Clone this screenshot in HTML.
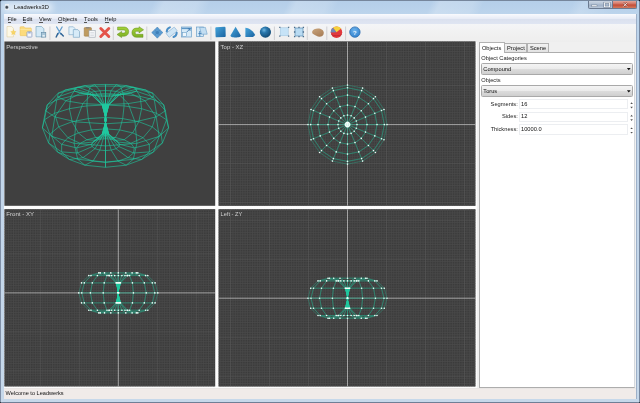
<!DOCTYPE html>
<html><head><meta charset="utf-8"><title>Leadwerks3D</title>
<style>
html,body{margin:0;padding:0;}
body{width:640px;height:403px;overflow:hidden;background:#10151c;font-family:"Liberation Sans",sans-serif;position:relative;}
#win{position:absolute;left:0;top:0;width:640px;height:403px;overflow:hidden;border-radius:3.5px 3.5px 3px 3px;
 background:linear-gradient(#b4cee9,#bcd4ec 14px,#c3d6ea 200px,#c6d8ea 403px);}
.abs{position:absolute}
#glow{left:3px;top:2.5px;width:50px;height:9px;background:rgba(255,255,255,.6);filter:blur(3px);border-radius:4px}
.mi,.lbl,.tab,.combo span,.inp span,#title,#status span{opacity:0.999}
#streaks{left:0;top:0;width:640px;height:14px;background:linear-gradient(115deg,rgba(255,255,255,0) 140px,rgba(255,255,255,.22) 150px,rgba(255,255,255,.18) 180px,rgba(255,255,255,0) 192px,rgba(255,255,255,0) 262px,rgba(255,255,255,.2) 270px,rgba(255,255,255,.14) 298px,rgba(255,255,255,0) 308px,rgba(255,255,255,0) 392px,rgba(255,255,255,.22) 400px,rgba(255,255,255,.16) 430px,rgba(255,255,255,0) 440px,rgba(255,255,255,0) 520px,rgba(255,255,255,.15) 530px,rgba(255,255,255,0) 560px)}

#edge-t{left:0;top:0;width:640px;height:1px;background:#76869c}
#edge-l{left:0;top:0;width:1px;height:403px;background:#7f8fa6}
#edge-r{left:639px;top:0;width:1px;height:403px;background:#76879f}
#edge-b{left:0;top:402px;width:640px;height:1px;background:#6f7f96}
#title{left:14px;top:2.6px;font-size:5.7px;color:#111;white-space:nowrap;line-height:8px;}
#appicon{left:4.6px;top:4.4px;width:4.4px;height:5.2px;background:radial-gradient(circle at 45% 55%,#3a4048 0,#4a5058 0.9px,#dfe6ee 2px,#eef2f7 3px);border-radius:0.5px}
#client{left:4px;top:14.3px;width:632.2px;height:384.7px;background:#f0f0f0;}
#cborder{left:3.7px;top:13.8px;width:632.9px;height:385.6px;border:0.5px solid #9db0c8;box-sizing:border-box}
#menubar{left:4.2px;top:14.4px;width:632px;height:9.6px;background:linear-gradient(#f9fafd,#e8ecf6 45%,#dbe1ef 55%,#dfe5f2);}
.mi{position:absolute;top:16.2px;font-size:5.7px;line-height:7px;color:#111;white-space:nowrap}
.mi u{text-decoration:none;display:inline-block;line-height:6.3px;border-bottom:0.4px solid #555}
#toolbar{left:4px;top:24px;width:632px;height:17.5px;background:linear-gradient(#f4f5f7,#f0f0f0 60%,#eeeeee);}
.sep{position:absolute;top:26.5px;width:0.6px;height:12px;background:#b8b8b8}
#panel{left:478.6px;top:52px;width:156.2px;height:336.3px;background:#fff;border:1px solid #adadad;border-right-color:#d4d8dd;box-sizing:border-box}
.tab{position:absolute;font-size:5.7px;line-height:7px;color:#111;box-sizing:border-box;border:1px solid #b2b2b2;border-bottom:none;text-align:center;white-space:nowrap}
.lbl{position:absolute;font-size:5.7px;line-height:7px;color:#222;white-space:nowrap}
.combo{position:absolute;left:481.3px;width:151.4px;height:11.7px;box-sizing:border-box;border:1px solid #a9a9a9;border-radius:1.5px;background:linear-gradient(#f4f4f4,#ebebeb 48%,#dcdcdc 52%,#cfcfcf);}
.combo span{position:absolute;left:1px;top:1.5px;font-size:5.7px;line-height:7px;color:#111}
.combo i{display:none}
.inp{position:absolute;left:519.2px;width:108.6px;height:10.6px;box-sizing:border-box;border:1px solid #eceef1;background:#fff}
.inp span{position:absolute;left:0.8px;top:0.9px;font-size:5.7px;line-height:7px;color:#111}
.spin{position:absolute;left:630px;width:0;height:0;border-left:1.5px solid transparent;border-right:1.5px solid transparent}
.up{border-bottom:1.8px solid #444}
.dn{border-top:1.8px solid #444}
#status{left:4px;top:388.2px;width:632.2px;height:10.9px;background:linear-gradient(#e2e0df,#f0ebe9 1px,#f0ebe9);box-sizing:border-box}
#status span{position:absolute;left:1.6px;top:2.3px;font-size:5.6px;line-height:7px;color:#111;white-space:nowrap}
#vpbg{left:4px;top:41.5px;width:473px;height:346.8px;background:#fcfcfc}
.cap{position:absolute;top:0.6px;height:8.6px;box-sizing:border-box;border:0.5px solid #6b7a90;border-top:none;}
</style></head>
<body>
<div id="win">
 <div class="abs" id="streaks"></div>
 <div class="abs" id="client"></div>
 <div class="abs" id="cborder"></div>
 <div class="abs" id="glow"></div>
 <div class="abs" id="appicon"></div>
 <div class="abs" id="title">Leadwerks3D</div>
 <!-- caption buttons -->
 <div class="cap" style="left:588px;width:12.6px;border-radius:0 0 0 2px;background:linear-gradient(#ccd7e4,#b0bfd2 48%,#9fb0c6 54%,#b9c7d9)"></div>
 <div class="cap" style="left:600.4px;width:12.8px;border-left:none;background:linear-gradient(#ccd7e4,#b0bfd2 48%,#9fb0c6 54%,#b9c7d9)"></div>
 <div class="cap" style="left:613px;width:24px;border-left:none;border-radius:0 0 2px 0;background:linear-gradient(#e3a79b,#d06d5b 45%,#c24a35 55%,#d27a5e)"></div>
 <svg class="abs" style="left:588px;top:0" width="50" height="10" viewBox="0 0 50 10">
  <rect x="3.6" y="5" width="5.4" height="1.6" fill="#fff" stroke="#5a6b82" stroke-width="0.4"/>
  <rect x="16.4" y="2.8" width="5.2" height="4" fill="none" stroke="#5a6b82" stroke-width="1.7"/>
  <rect x="16.4" y="2.8" width="5.2" height="4" fill="none" stroke="#fff" stroke-width="0.9"/>
  <path d="M35.4 2.9l3.6 3.6M39 2.9l-3.600 3.600" stroke="#8a3a2c" stroke-width="1.700" fill="none"/>
  <path d="M35.4 2.9l3.6 3.6M39 2.9l-3.600 3.600" stroke="#fbeeee" stroke-width="0.950" fill="none"/>
 </svg>
 <div class="abs" id="menubar"></div>
 <div class="mi" style="left:7.6px"><u>F</u>ile</div>
 <div class="mi" style="left:22.6px"><u>E</u>dit</div>
 <div class="mi" style="left:39px"><u>V</u>iew</div>
 <div class="mi" style="left:58px"><u>O</u>bjects</div>
 <div class="mi" style="left:84px"><u>T</u>ools</div>
 <div class="mi" style="left:104.6px"><u>H</u>elp</div>
 <div class="abs" id="toolbar"></div>
 <svg class="abs" style="left:0;top:24px" width="400" height="18" viewBox="0 24 400 18">
 <defs>
  <linearGradient id="gblue" x1="0" y1="0" x2="1" y2="1"><stop offset="0" stop-color="#46a6dc"/><stop offset="1" stop-color="#1a629f"/></linearGradient>
  <radialGradient id="gsph" cx="0.38" cy="0.32" r="0.7"><stop offset="0" stop-color="#6fb6e0"/><stop offset="0.35" stop-color="#2a78ad"/><stop offset="1" stop-color="#134a74"/></radialGradient>
  <linearGradient id="ggreen" x1="0" y1="0" x2="0" y2="1"><stop offset="0" stop-color="#a5d23c"/><stop offset="1" stop-color="#7caf22"/></linearGradient>
  <radialGradient id="ghelp" cx="0.45" cy="0.35" r="0.7"><stop offset="0" stop-color="#6db4ee"/><stop offset="1" stop-color="#2f7fcb"/></radialGradient>
  <linearGradient id="gbrown" x1="0" y1="0" x2="0.6" y2="1"><stop offset="0" stop-color="#c9a57c"/><stop offset="1" stop-color="#a97f58"/></linearGradient>
  <filter id="soft" x="-10%" y="-10%" width="120%" height="120%"><feGaussianBlur stdDeviation="0.45"/></filter>
 </defs>
 <g filter="url(#soft)">
 <!-- separators -->
 <path d="M49.9 26.5V40M113.3 26.5V40M146.8 26.5V40M210.9 26.5V40M274.4 26.5V40M307.3 26.5V40M326.8 26.5V40M345.6 26.5V40" stroke="#c2c2c6" stroke-width="0.7" fill="none"/>
 <!-- 1 new -->
 <path d="M7 26.5h4.6l1.8 1.8v8.6H7z" fill="#fdf8e6" stroke="#d9c89a" stroke-width="0.5"/>
 <path d="M13.4 29.6l0.9 1.7 1.9 0.3-1.4 1.3 0.4 1.9-1.8-0.9-1.7 0.9 0.3-1.9-1.3-1.3 1.9-0.3z" fill="#f7d567" stroke="#ecbc45" stroke-width="0.2"/>
 <!-- 2 open -->
 <path d="M20 27.4c0-0.4 0.3-0.7 0.7-0.7h3.4l1 1.2h5.5c0.4 0 0.7 0.3 0.7 0.7v6.4c0 0.4-0.3 0.7-0.7 0.7H20.7c-0.4 0-0.7-0.3-0.7-0.7z" fill="#fcdb7c" stroke="#ecbf55" stroke-width="0.5"/>
 <path d="M20.3 29.4h10.8" stroke="#fde9a6" stroke-width="0.8"/>
 <rect x="27" y="31.8" width="4.9" height="5.3" rx="0.6" fill="#f4f7fc" stroke="#7f93bd" stroke-width="0.7"/>
 <rect x="28.2" y="31.9" width="2.4" height="1.6" fill="#9db1d6"/>
 <!-- 3 save-as -->
 <path d="M36 26.5h5.6l2.3 2.3v8H36z" fill="#d3e9f6" stroke="#6f9dbb" stroke-width="0.6"/>
 <rect x="41.5" y="32.5" width="4.3" height="4.6" fill="#a9c6d8" stroke="#5f87a3" stroke-width="0.6"/>
 <rect x="42.5" y="35" width="2.3" height="1.6" fill="#e6f0f6"/>
 <!-- 4 cut -->
 <path d="M56.6 26.9l4.2 7.2M62.2 26.9l-4.2 7.2" stroke="#66a0d0" stroke-width="1.15" stroke-linecap="round" fill="none"/>
 <path d="M57.8 33.6l-1.6 3.4M60.9 33.6l2.4 2.4" stroke="#2f6394" stroke-width="1.45" stroke-linecap="round" fill="none"/>
 <!-- 5 copy -->
 <path d="M68.9 26.8h4.4l1.6 1.6v6.3h-6z" fill="#e2f1fa" stroke="#7ba5c6" stroke-width="0.6"/>
 <path d="M73.3 29.6h4.5l1.7 1.7v6h-6.2z" fill="#d7ebf8" stroke="#6f9dc0" stroke-width="0.6"/>
 <!-- 6 paste -->
 <rect x="84.2" y="27.6" width="7.2" height="8.6" rx="0.7" fill="#bf9b5e" stroke="#9a773f" stroke-width="0.5"/>
 <rect x="86" y="26.9" width="3.6" height="1.7" rx="0.5" fill="#8f8a82"/>
 <rect x="89" y="30.5" width="6.2" height="6.7" fill="#f7f8fa" stroke="#9aa3ad" stroke-width="0.6"/>
 <path d="M90.3 32.5h3.6M90.3 34h3.6M90.3 35.5h3.6" stroke="#c3c9d0" stroke-width="0.5"/>
 <!-- 7 delete -->
 <path d="M100.8 28.5l8 8M108.8 28.5l-8 8" stroke="#e4524a" stroke-width="2.9" stroke-linecap="round" fill="none"/>
 <!-- 8 undo -->
 <path d="M117.6 27h6.6c2.6 0 4.5 2 4.5 4.6c0 2.700000000000003-1.9 4.600000000000001-4.5 4.600000000000001h-2.6v1.4l-4.6-3.1 4.6-3.1v1.6h2.2c1 0 1.6-0.6 1.6-1.5c0-0.9-0.6-1.5-1.6-1.5h-6.2z" fill="url(#ggreen)" stroke="#638f1d" stroke-width="0.5" stroke-linejoin="round"/>
 <!-- 9 redo -->
 <path d="M143 37.300000000000004h-6.6c-2.6 0-4.5-2-4.5-4.6c0-2.7 1.9-4.600000000000001 4.5-4.600000000000001h2.6v-1.4l4.6 3.1-4.6 3.1v-1.6h-2.2c-1 0-1.6 0.6-1.6 1.5c0 0.9 0.6 1.5 1.6 1.5h6.2z" fill="url(#ggreen)" stroke="#638f1d" stroke-width="0.5" stroke-linejoin="round"/>
 <!-- 10 move -->
 <path d="M157.300 27l2.600 2.700-1.100 1.400 1.400-1.100 2.700 2.600-2.700 2.600-1.400-1.100 1.100 1.400-2.600 2.700-2.600-2.700 1.100-1.400-1.400 1.100-2.700-2.600 2.700-2.600 1.400 1.100-1.100-1.400z" fill="#5a9bd0" stroke="#3d7db6" stroke-width="0.500" stroke-linejoin="round"/>
 <circle cx="157.300" cy="32.600" r="1.700" fill="#3f7fb8"/>
 <!-- 11 rotate -->
 <g transform="rotate(-38 171.700 32.200)"><rect x="166.500" y="29.700" width="10.400" height="5" rx="0.600" fill="#cfe5f5" stroke="#86b0d3" stroke-width="0.600"/></g>
 <path d="M166.700 31.600c0.200-2.200 1.400-3.600 3.200-4.200M176.700 32.800c-0.200 2.200-1.400 3.600-3.200 4.200" stroke="#4a8ec6" stroke-width="2" fill="none" stroke-linecap="round"/>
 <!-- 12 scale -->
 <rect x="181.600" y="27" width="10" height="10" fill="#d5e9f7" stroke="#6c9fc8" stroke-width="0.700"/>
 <path d="M181.600 28.400h10" stroke="#5f97c6" stroke-width="1.400"/>
 <rect x="182.300" y="32.300" width="4.200" height="4.200" fill="#eef6fc" stroke="#6c9fc8" stroke-width="0.600"/>
 <path d="M186.800 32l3.200-3.200M187.800 28.800h2.200v2.200" stroke="#3573ad" stroke-width="0.800" fill="none"/>
 <!-- 13 shear -->
 <rect x="196.400" y="27" width="7" height="9.600" fill="#d5e9f7" stroke="#6c9fc8" stroke-width="0.700"/>
 <path d="M199.600 27.400h5.800l1.800 6.800h-5.800z" fill="#c3def2" stroke="#6c9fc8" stroke-width="0.600"/>
 <path d="M199.800 31v5.400M198.400 33.600h3" stroke="#3f7eb6" stroke-width="0.900" fill="none"/>
 <!-- 14 cube -->
 <path d="M215.300 28.200c0-0.500 0.300-0.800 0.800-0.900l8.400-0.500c0.600 0 1 0.300 1 0.900l0.200 8.200c0 0.500-0.300 0.900-0.800 1l-8.300 0.400c-0.600 0-1-0.300-1-0.900z" fill="url(#gblue)"/>
 <!-- 15 cone -->
 <path d="M235.600 26.800l5.200 8.600c0.300 1.200-2.200 2-5.200 2c-3 0-5.400-0.800-5.100-2z" fill="url(#gblue)"/>
 <!-- 16 wedge -->
 <path d="M245.400 27.700c4.400 0.600 8 3.600 9.800 7.200l-2.200 2h-7.600z" fill="url(#gblue)"/>
 <!-- 17 sphere -->
 <circle cx="265.400" cy="32.100" r="5.600" fill="url(#gsph)"/>
 <!-- 18 select -->
 <rect x="280.200" y="27.800" width="8" height="8" fill="#c6e3f7" stroke="#9cc0dc" stroke-width="0.500"/>
 <path d="M279.800 27.400h0.010M288.600 27.400h0.010M279.800 36.200h0.010M288.600 36.200h0.010" stroke="#55748f" stroke-width="1.300" stroke-linecap="square"/>
 <!-- 19 select2 -->
 <rect x="295" y="28" width="8" height="8" fill="#b9dbf2" stroke="#5e8fb4" stroke-width="0.700"/>
 <path d="M294.600 27.300h0.010M299 27.300h0.010M303.400 27.300h0.010M294.600 36.600h0.010M299 36.600h0.010M303.400 36.600h0.010M294.600 32h0.010M303.400 32h0.010" stroke="#4a6c8c" stroke-width="1.300" stroke-linecap="square"/>
 <!-- 20 blob -->
 <path d="M312.200 31.600c0.600-2 3-3.200 5.800-3.200c3.200 0 5.800 1.600 5.800 4.400c0 2.400-1.800 4-4.400 4c-2.200 0-3-1.200-4.600-1.800c-1.600-0.600-3.100-1.600-2.600-3.400z" fill="url(#gbrown)"/>
 <!-- 21 ball -->
 <circle cx="336.500" cy="32.200" r="5.700" fill="#e2383c"/>
 <path d="M336.500 32.200l-3.600-4.400c2.400-1.800 6-1.700 8.200 0.600z" fill="#f6d23e"/>
 <path d="M336.500 32.200l-3.600-4.400c-1.500 1.200-2.200 2.800-2.100 4.600z" fill="#6f88b4"/>
 <path d="M331.200 34.500c1.800 1.800 8.400 1.900 10.600 0" stroke="#b8242a" stroke-width="0.800" fill="none"/>
 <!-- 22 help -->
 <circle cx="354.900" cy="32.100" r="5.200" fill="url(#ghelp)" stroke="#2c6db0" stroke-width="0.800"/>
 <text x="354.900" y="34.500" font-family='"Liberation Sans",sans-serif' font-size="6.200" font-weight="bold" fill="#eaf4fd" text-anchor="middle">?</text>
 </g>
</svg>

 <div class="abs" id="vpbg"></div>
 <svg id="vps" width="640" height="403" viewBox="0 0 640 403" style="position:absolute;left:0;top:0;opacity:0.999">
<defs>
<clipPath id="c_persp"><rect x="4.40" y="41.50" width="210.80" height="164.30" fill="#000"/></clipPath>
<clipPath id="c_top"><rect x="218.50" y="41.50" width="257.00" height="164.30" fill="#000"/></clipPath>
<clipPath id="c_front"><rect x="4.40" y="209.20" width="210.80" height="177.30" fill="#000"/></clipPath>
<clipPath id="c_left"><rect x="218.50" y="209.20" width="257.00" height="177.30" fill="#000"/></clipPath>
</defs>
<rect x="4.40" y="41.50" width="210.80" height="164.30" fill="#404040"/>
<g clip-path="url(#c_persp)"><path d="M166.5 119.8L156.5 113.3M166.5 119.8L163.7 104.8M163.7 104.8L154.3 99.9M163.7 104.8L153.0 93.3M153.0 93.3L146.0 90.1M153.0 93.3L137.1 89.0M137.1 89.0L133.1 87.1M137.1 89.0L120.8 93.3M120.8 93.3L119.3 92.2M120.8 93.3L108.9 104.8M108.8 134.2L119.6 144.3M119.6 144.3L118.2 142.1M119.6 144.3L134.3 147.9M134.3 147.9L130.8 143.3M134.3 147.9L149.3 144.3M149.3 144.3L143.1 137.7M149.3 144.3L161.1 134.2M161.1 134.2L152.3 126.9M161.1 134.2L166.5 119.8M156.5 113.3L141.6 108.7M156.5 113.3L154.3 99.9M154.3 99.9L140.2 96.4M154.3 99.9L146.0 90.1M146.0 90.1L134.6 87.8M146.0 90.1L133.1 87.1M133.1 87.1L125.8 85.6M133.1 87.1L119.3 92.2M119.3 92.2L115.8 91.4M119.3 92.2L108.7 104.4M108.5 133.7L118.2 142.1M118.2 142.1L115.0 140.3M118.2 142.1L130.8 143.3M130.8 143.3L124.1 139.8M130.8 143.3L143.1 137.7M143.1 137.7L132.7 132.9M143.1 137.7L152.3 126.9M152.3 126.9L138.8 121.7M152.3 126.9L156.5 113.3M141.6 108.7L124.1 105.9M141.6 108.7L140.2 96.4M140.2 96.4L123.4 94.4M140.2 96.4L134.6 87.8M134.6 87.8L120.6 86.4M134.6 87.8L125.8 85.6M125.8 85.6L116.2 84.7M125.8 85.6L115.8 91.4M115.8 91.4L111.0 90.8M115.8 91.4L107.9 104.2M107.8 133.3L115.0 140.3M115.0 140.3L110.6 139.1M115.0 140.3L124.1 139.8M124.1 139.8L115.3 137.5M124.1 139.8L132.7 132.9M132.7 132.9L119.7 129.9M132.7 132.9L138.8 121.7M138.8 121.7L122.7 118.6M138.8 121.7L141.6 108.7M124.1 105.9L105.5 105.0M124.1 105.9L123.4 94.4M123.4 94.4L105.5 93.7M123.4 94.4L120.6 86.4M120.6 86.4L105.5 86.0M120.6 86.4L116.2 84.7M116.2 84.7L105.5 84.4M116.2 84.7L111.0 90.8M111.0 90.8L105.5 90.6M111.0 90.8L106.8 104.0M106.7 133.0L110.6 139.1M110.6 139.1L105.5 138.7M110.6 139.1L115.3 137.5M115.3 137.5L105.5 136.8M115.3 137.5L119.7 129.9M119.7 129.9L105.5 128.9M119.7 129.9L122.7 118.6M122.7 118.6L105.5 117.5M122.7 118.6L124.1 105.9M105.5 105.0L86.9 105.9M105.5 105.0L105.5 93.7M105.5 93.7L87.6 94.4M105.5 93.7L105.5 86.0M105.5 86.0L90.4 86.4M105.5 86.0L105.5 84.4M105.5 84.4L94.8 84.7M105.5 84.4L105.5 90.6M105.5 90.6L100.0 90.8M105.5 90.6L105.5 103.9M105.5 133.0L105.5 138.7M105.5 138.7L100.4 139.1M105.5 138.7L105.5 136.8M105.5 136.8L95.7 137.5M105.5 136.8L105.5 128.9M105.5 128.9L91.3 129.9M105.5 128.9L105.5 117.5M105.5 117.5L88.3 118.6M105.5 117.5L105.5 105.0M86.9 105.9L69.4 108.7M86.9 105.9L87.6 94.4M87.6 94.4L70.8 96.4M87.6 94.4L90.4 86.4M90.4 86.4L76.4 87.8M90.4 86.4L94.8 84.7M94.8 84.7L85.2 85.6M94.8 84.7L100.0 90.8M100.0 90.8L95.2 91.4M100.0 90.8L104.2 104.0M104.3 133.0L100.4 139.1M100.4 139.1L96.0 140.3M100.4 139.1L95.7 137.5M95.7 137.5L86.9 139.8M95.7 137.5L91.3 129.9M91.3 129.9L78.3 132.9M91.3 129.9L88.3 118.6M88.3 118.6L72.2 121.7M88.3 118.6L86.9 105.9M69.4 108.7L54.5 113.3M69.4 108.7L70.8 96.4M70.8 96.4L56.7 99.9M70.8 96.4L76.4 87.8M76.4 87.8L65.0 90.1M76.4 87.8L85.2 85.6M85.2 85.6L77.9 87.1M85.2 85.6L95.2 91.4M95.2 91.4L91.7 92.2M95.2 91.4L103.1 104.2M103.2 133.3L96.0 140.3M96.0 140.3L92.8 142.1M96.0 140.3L86.9 139.8M86.9 139.8L80.2 143.3M86.9 139.8L78.3 132.9M78.3 132.9L67.9 137.7M78.3 132.9L72.2 121.7M72.2 121.7L58.7 126.9M72.2 121.7L69.4 108.7M54.5 113.3L44.5 119.8M54.5 113.3L56.7 99.9M56.7 99.9L47.3 104.8M56.7 99.9L65.0 90.1M65.0 90.1L58.0 93.3M65.0 90.1L77.9 87.1M77.9 87.1L73.9 89.0M77.9 87.1L91.7 92.2M91.7 92.2L90.2 93.3M91.7 92.2L102.3 104.4M102.5 133.7L92.8 142.1M92.8 142.1L91.4 144.3M92.8 142.1L80.2 143.3M80.2 143.3L76.7 147.9M80.2 143.3L67.9 137.7M67.9 137.7L61.7 144.3M67.9 137.7L58.7 126.9M58.7 126.9L49.9 134.2M58.7 126.9L54.5 113.3M44.5 119.8L42.4 127.9M44.5 119.8L47.3 104.8M47.3 104.8L45.6 110.7M47.3 104.8L58.0 93.3M58.0 93.3L57.7 97.0M58.0 93.3L73.9 89.0M73.9 89.0L74.6 91.2M73.9 89.0L90.2 93.3M90.2 93.3L91.0 94.4M90.2 93.3L102.1 104.8M102.2 134.2L91.4 144.3M91.4 144.3L92.1 146.6M91.4 144.3L76.7 147.9M76.7 147.9L77.5 153.0M76.7 147.9L61.7 144.3M61.7 144.3L61.6 151.9M61.7 144.3L49.9 134.2M49.9 134.2L48.6 143.0M49.9 134.2L44.5 119.8M42.4 127.9L51.8 136.4M42.4 127.9L45.6 110.7M45.6 110.7L54.8 116.9M45.6 110.7L57.7 97.0M57.7 97.0L65.9 100.8M57.7 97.0L74.6 91.2M74.6 91.2L80.6 93.2M74.6 91.2L91.0 94.4M91.0 94.4L94.1 95.4M91.0 94.4L102.3 105.1M102.4 134.6L92.1 146.6M92.1 146.6L95.0 148.7M92.1 146.6L77.5 153.0M77.5 153.0L83.0 157.7M77.5 153.0L61.6 151.9M61.6 151.9L69.4 159.5M61.6 151.9L48.6 143.0M48.6 143.0L57.6 152.1M48.6 143.0L42.4 127.9M51.8 136.4L74.1 143.3M51.8 136.4L54.8 116.9M54.8 116.9L76.0 121.9M54.8 116.9L65.9 100.8M65.9 100.8L82.8 103.6M65.9 100.8L80.6 93.2M80.6 93.2L91.6 94.7M80.6 93.2L94.1 95.4M94.1 95.4L99.2 96.1M94.1 95.4L103.0 105.4M103.1 135.0L95.0 148.7M95.0 148.7L99.8 150.1M95.0 148.7L83.0 157.7M83.0 157.7L93.0 161.1M83.0 157.7L69.4 159.5M69.4 159.5L84.9 165.2M69.4 159.5L57.6 152.1M57.6 152.1L77.7 159.3M57.6 152.1L51.8 136.4M74.1 143.3L105.5 145.9M74.1 143.3L76.0 121.9M76.0 121.9L105.5 123.8M76.0 121.9L82.8 103.6M82.8 103.6L105.5 104.7M82.8 103.6L91.6 94.7M91.6 94.7L105.5 95.2M91.6 94.7L99.2 96.1M99.2 96.1L105.5 96.4M99.2 96.1L104.2 105.5M104.2 135.3L99.8 150.1M99.8 150.1L105.5 150.6M99.8 150.1L93.0 161.1M93.0 161.1L105.5 162.4M93.0 161.1L84.9 165.2M84.9 165.2L105.5 167.3M84.9 165.2L77.7 159.3M77.7 159.3L105.5 162.1M77.7 159.3L74.1 143.3M105.5 145.9L136.9 143.3M105.5 145.9L105.5 123.8M105.5 123.8L135.0 121.9M105.5 123.8L105.5 104.7M105.5 104.7L128.2 103.6M105.5 104.7L105.5 95.2M105.5 95.2L119.4 94.7M105.5 95.2L105.5 96.4M105.5 96.4L111.8 96.1M105.5 96.4L105.5 105.6M105.5 135.4L105.5 150.6M105.5 150.6L111.2 150.1M105.5 150.6L105.5 162.4M105.5 162.4L118.0 161.1M105.5 162.4L105.5 167.3M105.5 167.3L126.1 165.2M105.5 167.3L105.5 162.1M105.5 162.1L133.3 159.3M105.5 162.1L105.5 145.9M136.9 143.3L159.2 136.4M136.9 143.3L135.0 121.9M135.0 121.9L156.2 116.9M135.0 121.9L128.2 103.6M128.2 103.6L145.1 100.8M128.2 103.6L119.4 94.7M119.4 94.7L130.4 93.2M119.4 94.7L111.8 96.1M111.8 96.1L116.9 95.4M111.8 96.1L106.8 105.5M106.8 135.3L111.2 150.1M111.2 150.1L116.0 148.7M111.2 150.1L118.0 161.1M118.0 161.1L128.0 157.7M118.0 161.1L126.1 165.2M126.1 165.2L141.6 159.5M126.1 165.2L133.3 159.3M133.3 159.3L153.4 152.1M133.3 159.3L136.9 143.3M159.2 136.4L168.6 127.9M159.2 136.4L156.2 116.9M156.2 116.9L165.4 110.7M156.2 116.9L145.1 100.8M145.1 100.8L153.3 97.0M145.1 100.8L130.4 93.2M130.4 93.2L136.4 91.2M130.4 93.2L116.9 95.4M116.9 95.4L120.0 94.4M116.9 95.4L108.0 105.4M107.9 135.0L116.0 148.7M116.0 148.7L118.9 146.6M116.0 148.7L128.0 157.7M128.0 157.7L133.5 153.0M128.0 157.7L141.6 159.5M141.6 159.5L149.4 151.9M141.6 159.5L153.4 152.1M153.4 152.1L162.4 143.0M153.4 152.1L159.2 136.4M168.6 127.9L166.5 119.8M168.6 127.9L165.4 110.7M165.4 110.7L163.7 104.8M165.4 110.7L153.3 97.0M153.3 97.0L153.0 93.3M153.3 97.0L136.4 91.2M136.4 91.2L137.1 89.0M136.4 91.2L120.0 94.4M120.0 94.4L120.8 93.3M120.0 94.4L108.7 105.1M108.6 134.6L118.9 146.6M118.9 146.6L119.6 144.3M118.9 146.6L133.5 153.0M133.5 153.0L134.3 147.9M133.5 153.0L149.4 151.9M149.4 151.9L149.3 144.3M149.4 151.9L162.4 143.0M162.4 143.0L161.1 134.2M162.4 143.0L168.6 127.9" stroke="#1fcaa0" stroke-width="0.6" fill="none"/><path d="M108.9 104.8L108.7 104.4M108.9 104.8L104.7 119.8M104.7 119.8L104.8 119.9M104.7 119.8L108.8 134.2M108.8 134.2L108.5 133.7M108.7 104.4L107.9 104.2M108.7 104.4L104.8 119.9M104.8 119.9L105.0 120.0M104.8 119.9L108.5 133.7M108.5 133.7L107.8 133.3M107.9 104.2L106.8 104.0M107.9 104.2L105.0 120.0M105.0 120.0L105.2 120.0M105.0 120.0L107.8 133.3M107.8 133.3L106.7 133.0M106.8 104.0L105.5 103.9M106.8 104.0L105.2 120.0M105.2 120.0L105.5 120.0M105.2 120.0L106.7 133.0M106.7 133.0L105.5 133.0M105.5 103.9L104.2 104.0M105.5 103.9L105.5 120.0M105.5 120.0L105.8 120.0M105.5 120.0L105.5 133.0M105.5 133.0L104.3 133.0M104.2 104.0L103.1 104.2M104.2 104.0L105.8 120.0M105.8 120.0L106.0 120.0M105.8 120.0L104.3 133.0M104.3 133.0L103.2 133.3M103.1 104.2L102.3 104.4M103.1 104.2L106.0 120.0M106.0 120.0L106.2 119.9M106.0 120.0L103.2 133.3M103.2 133.3L102.5 133.7M102.3 104.4L102.1 104.8M102.3 104.4L106.2 119.9M106.2 119.9L106.3 119.8M106.2 119.9L102.5 133.7M102.5 133.7L102.2 134.2M102.1 104.8L102.3 105.1M102.1 104.8L106.3 119.8M106.3 119.8L106.2 119.7M106.3 119.8L102.2 134.2M102.2 134.2L102.4 134.6M102.3 105.1L103.0 105.4M102.3 105.1L106.2 119.7M106.2 119.7L106.0 119.6M106.2 119.7L102.4 134.6M102.4 134.6L103.1 135.0M103.0 105.4L104.2 105.5M103.0 105.4L106.0 119.6M106.0 119.6L105.8 119.6M106.0 119.6L103.1 135.0M103.1 135.0L104.2 135.3M104.2 105.5L105.5 105.6M104.2 105.5L105.8 119.6M105.8 119.6L105.5 119.6M105.8 119.6L104.2 135.3M104.2 135.3L105.5 135.4M105.5 105.6L106.8 105.5M105.5 105.6L105.5 119.6M105.5 119.6L105.2 119.6M105.5 119.6L105.5 135.4M105.5 135.4L106.8 135.3M106.8 105.5L108.0 105.4M106.8 105.5L105.2 119.6M105.2 119.6L105.0 119.6M105.2 119.6L106.8 135.3M106.8 135.3L107.9 135.0M108.0 105.4L108.7 105.1M108.0 105.4L105.0 119.6M105.0 119.6L104.8 119.7M105.0 119.6L107.9 135.0M107.9 135.0L108.6 134.6M108.7 105.1L108.9 104.8M108.7 105.1L104.8 119.7M104.8 119.7L104.7 119.8M104.8 119.7L108.6 134.6M108.6 134.6L108.8 134.2" stroke="#1fcaa0" stroke-width="0.9" fill="none"/></g>
<rect x="218.50" y="41.50" width="257.00" height="164.30" fill="#3c3c3c"/>
<g clip-path="url(#c_top)">
<path d="M220.75 41.50V205.80M223.19 41.50V205.80M225.62 41.50V205.80M228.06 41.50V205.80M232.94 41.50V205.80M235.38 41.50V205.80M237.81 41.50V205.80M240.25 41.50V205.80M242.69 41.50V205.80M245.12 41.50V205.80M247.56 41.50V205.80M250.00 41.50V205.80M252.44 41.50V205.80M254.88 41.50V205.80M257.31 41.50V205.80M259.75 41.50V205.80M262.19 41.50V205.80M264.62 41.50V205.80M267.06 41.50V205.80M271.94 41.50V205.80M274.38 41.50V205.80M276.81 41.50V205.80M279.25 41.50V205.80M281.69 41.50V205.80M284.12 41.50V205.80M286.56 41.50V205.80M289.00 41.50V205.80M291.44 41.50V205.80M293.88 41.50V205.80M296.31 41.50V205.80M298.75 41.50V205.80M301.19 41.50V205.80M303.62 41.50V205.80M306.06 41.50V205.80M310.94 41.50V205.80M313.38 41.50V205.80M315.81 41.50V205.80M318.25 41.50V205.80M320.69 41.50V205.80M323.12 41.50V205.80M325.56 41.50V205.80M328.00 41.50V205.80M330.44 41.50V205.80M332.88 41.50V205.80M335.31 41.50V205.80M337.75 41.50V205.80M340.19 41.50V205.80M342.62 41.50V205.80M345.06 41.50V205.80M349.94 41.50V205.80M352.38 41.50V205.80M354.81 41.50V205.80M357.25 41.50V205.80M359.69 41.50V205.80M362.12 41.50V205.80M364.56 41.50V205.80M367.00 41.50V205.80M369.44 41.50V205.80M371.88 41.50V205.80M374.31 41.50V205.80M376.75 41.50V205.80M379.19 41.50V205.80M381.62 41.50V205.80M384.06 41.50V205.80M388.94 41.50V205.80M391.38 41.50V205.80M393.81 41.50V205.80M396.25 41.50V205.80M398.69 41.50V205.80M401.12 41.50V205.80M403.56 41.50V205.80M406.00 41.50V205.80M408.44 41.50V205.80M410.88 41.50V205.80M413.31 41.50V205.80M415.75 41.50V205.80M418.19 41.50V205.80M420.62 41.50V205.80M423.06 41.50V205.80M427.94 41.50V205.80M430.38 41.50V205.80M432.81 41.50V205.80M435.25 41.50V205.80M437.69 41.50V205.80M440.12 41.50V205.80M442.56 41.50V205.80M445.00 41.50V205.80M447.44 41.50V205.80M449.88 41.50V205.80M452.31 41.50V205.80M454.75 41.50V205.80M457.19 41.50V205.80M459.62 41.50V205.80M462.06 41.50V205.80M466.94 41.50V205.80M469.38 41.50V205.80M471.81 41.50V205.80M474.25 41.50V205.80M218.50 41.72H475.50M218.50 44.16H475.50M218.50 49.04H475.50M218.50 51.47H475.50M218.50 53.91H475.50M218.50 56.35H475.50M218.50 58.79H475.50M218.50 61.22H475.50M218.50 63.66H475.50M218.50 66.10H475.50M218.50 68.54H475.50M218.50 70.97H475.50M218.50 73.41H475.50M218.50 75.85H475.50M218.50 78.29H475.50M218.50 80.72H475.50M218.50 83.16H475.50M218.50 88.04H475.50M218.50 90.47H475.50M218.50 92.91H475.50M218.50 95.35H475.50M218.50 97.79H475.50M218.50 100.22H475.50M218.50 102.66H475.50M218.50 105.10H475.50M218.50 107.54H475.50M218.50 109.97H475.50M218.50 112.41H475.50M218.50 114.85H475.50M218.50 117.29H475.50M218.50 119.72H475.50M218.50 122.16H475.50M218.50 127.04H475.50M218.50 129.47H475.50M218.50 131.91H475.50M218.50 134.35H475.50M218.50 136.79H475.50M218.50 139.22H475.50M218.50 141.66H475.50M218.50 144.10H475.50M218.50 146.54H475.50M218.50 148.97H475.50M218.50 151.41H475.50M218.50 153.85H475.50M218.50 156.29H475.50M218.50 158.72H475.50M218.50 161.16H475.50M218.50 166.04H475.50M218.50 168.47H475.50M218.50 170.91H475.50M218.50 173.35H475.50M218.50 175.79H475.50M218.50 178.22H475.50M218.50 180.66H475.50M218.50 183.10H475.50M218.50 185.54H475.50M218.50 187.97H475.50M218.50 190.41H475.50M218.50 192.85H475.50M218.50 195.29H475.50M218.50 197.72H475.50M218.50 200.16H475.50M218.50 205.04H475.50" stroke="#4a4a4a" stroke-width="0.8" fill="none"/><path d="M230.50 41.50V205.80M269.50 41.50V205.80M308.50 41.50V205.80M386.50 41.50V205.80M425.50 41.50V205.80M464.50 41.50V205.80M218.50 46.60H475.50M218.50 85.60H475.50M218.50 163.60H475.50M218.50 202.60H475.50" stroke="#565656" stroke-width="0.7" fill="none"/><path d="M347.50 41.50V205.80M218.50 124.60H475.50" stroke="#b6b6b6" stroke-width="0.85" fill="none"/>
<path d="M387.0 124.6L384.0 109.5M387.0 124.6L384.3 124.6M384.3 124.6L381.5 110.5M384.3 124.6L377.0 124.6M377.0 124.6L374.8 113.3M377.0 124.6L367.0 124.6M367.0 124.6L365.5 117.1M367.0 124.6L357.0 124.6M357.0 124.6L356.3 121.0M357.0 124.6L349.7 124.6M349.7 124.6L357.0 124.6M357.0 124.6L356.3 121.0M357.0 124.6L367.0 124.6M367.0 124.6L365.5 117.1M367.0 124.6L377.0 124.6M377.0 124.6L374.8 113.3M377.0 124.6L384.3 124.6M384.3 124.6L381.5 110.5M384.3 124.6L387.0 124.6M384.0 109.5L375.4 96.7M384.0 109.5L381.5 110.5M381.5 110.5L373.5 98.6M381.5 110.5L374.8 113.3M374.8 113.3L368.4 103.7M374.8 113.3L365.5 117.1M365.5 117.1L361.3 110.8M365.5 117.1L356.3 121.0M356.3 121.0L354.2 117.9M356.3 121.0L349.5 123.8M349.5 123.8L356.3 121.0M356.3 121.0L354.2 117.9M356.3 121.0L365.5 117.1M365.5 117.1L361.3 110.8M365.5 117.1L374.8 113.3M374.8 113.3L368.4 103.7M374.8 113.3L381.5 110.5M381.5 110.5L373.5 98.6M381.5 110.5L384.0 109.5M375.4 96.7L362.6 88.1M375.4 96.7L373.5 98.6M373.5 98.6L361.6 90.6M373.5 98.6L368.4 103.7M368.4 103.7L358.8 97.3M368.4 103.7L361.3 110.8M361.3 110.8L355.0 106.6M361.3 110.8L354.2 117.9M354.2 117.9L351.1 115.8M354.2 117.9L349.0 123.1M349.0 123.1L354.2 117.9M354.2 117.9L351.1 115.8M354.2 117.9L361.3 110.8M361.3 110.8L355.0 106.6M361.3 110.8L368.4 103.7M368.4 103.7L358.8 97.3M368.4 103.7L373.5 98.6M373.5 98.6L361.6 90.6M373.5 98.6L375.4 96.7M362.6 88.1L347.5 85.1M362.6 88.1L361.6 90.6M361.6 90.6L347.5 87.8M361.6 90.6L358.8 97.3M358.8 97.3L347.5 95.1M358.8 97.3L355.0 106.6M355.0 106.6L347.5 105.1M355.0 106.6L351.1 115.8M351.1 115.8L347.5 115.1M351.1 115.8L348.3 122.6M348.3 122.6L351.1 115.8M351.1 115.8L347.5 115.1M351.1 115.8L355.0 106.6M355.0 106.6L347.5 105.1M355.0 106.6L358.8 97.3M358.8 97.3L347.5 95.1M358.8 97.3L361.6 90.6M361.6 90.6L347.5 87.8M361.6 90.6L362.6 88.1M347.5 85.1L332.4 88.1M347.5 85.1L347.5 87.8M347.5 87.8L333.4 90.6M347.5 87.8L347.5 95.1M347.5 95.1L336.2 97.3M347.5 95.1L347.5 105.1M347.5 105.1L340.0 106.6M347.5 105.1L347.5 115.1M347.5 115.1L343.9 115.8M347.5 115.1L347.5 122.4M347.5 122.4L347.5 115.1M347.5 115.1L343.9 115.8M347.5 115.1L347.5 105.1M347.5 105.1L340.0 106.6M347.5 105.1L347.5 95.1M347.5 95.1L336.2 97.3M347.5 95.1L347.5 87.8M347.5 87.8L333.4 90.6M347.5 87.8L347.5 85.1M332.4 88.1L319.6 96.7M332.4 88.1L333.4 90.6M333.4 90.6L321.5 98.6M333.4 90.6L336.2 97.3M336.2 97.3L326.6 103.7M336.2 97.3L340.0 106.6M340.0 106.6L333.7 110.8M340.0 106.6L343.9 115.8M343.9 115.8L340.8 117.9M343.9 115.8L346.7 122.6M346.7 122.6L343.9 115.8M343.9 115.8L340.8 117.9M343.9 115.8L340.0 106.6M340.0 106.6L333.7 110.8M340.0 106.6L336.2 97.3M336.2 97.3L326.6 103.7M336.2 97.3L333.4 90.6M333.4 90.6L321.5 98.6M333.4 90.6L332.4 88.1M319.6 96.7L311.0 109.5M319.6 96.7L321.5 98.6M321.5 98.6L313.5 110.5M321.5 98.6L326.6 103.7M326.6 103.7L320.2 113.3M326.6 103.7L333.7 110.8M333.7 110.8L329.5 117.1M333.7 110.8L340.8 117.9M340.8 117.9L338.7 121.0M340.8 117.9L346.0 123.1M346.0 123.1L340.8 117.9M340.8 117.9L338.7 121.0M340.8 117.9L333.7 110.8M333.7 110.8L329.5 117.1M333.7 110.8L326.6 103.7M326.6 103.7L320.2 113.3M326.6 103.7L321.5 98.6M321.5 98.6L313.5 110.5M321.5 98.6L319.6 96.7M311.0 109.5L308.0 124.6M311.0 109.5L313.5 110.5M313.5 110.5L310.7 124.6M313.5 110.5L320.2 113.3M320.2 113.3L318.0 124.6M320.2 113.3L329.5 117.1M329.5 117.1L328.0 124.6M329.5 117.1L338.7 121.0M338.7 121.0L338.0 124.6M338.7 121.0L345.5 123.8M345.5 123.8L338.7 121.0M338.7 121.0L338.0 124.6M338.7 121.0L329.5 117.1M329.5 117.1L328.0 124.6M329.5 117.1L320.2 113.3M320.2 113.3L318.0 124.6M320.2 113.3L313.5 110.5M313.5 110.5L310.7 124.6M313.5 110.5L311.0 109.5M308.0 124.6L311.0 139.7M308.0 124.6L310.7 124.6M310.7 124.6L313.5 138.7M310.7 124.6L318.0 124.6M318.0 124.6L320.2 135.9M318.0 124.6L328.0 124.6M328.0 124.6L329.5 132.1M328.0 124.6L338.0 124.6M338.0 124.6L338.7 128.2M338.0 124.6L345.3 124.6M345.3 124.6L338.0 124.6M338.0 124.6L338.7 128.2M338.0 124.6L328.0 124.6M328.0 124.6L329.5 132.1M328.0 124.6L318.0 124.6M318.0 124.6L320.2 135.9M318.0 124.6L310.7 124.6M310.7 124.6L313.5 138.7M310.7 124.6L308.0 124.6M311.0 139.7L319.6 152.5M311.0 139.7L313.5 138.7M313.5 138.7L321.5 150.6M313.5 138.7L320.2 135.9M320.2 135.9L326.6 145.5M320.2 135.9L329.5 132.1M329.5 132.1L333.7 138.4M329.5 132.1L338.7 128.2M338.7 128.2L340.8 131.3M338.7 128.2L345.5 125.4M345.5 125.4L338.7 128.2M338.7 128.2L340.8 131.3M338.7 128.2L329.5 132.1M329.5 132.1L333.7 138.4M329.5 132.1L320.2 135.9M320.2 135.9L326.6 145.5M320.2 135.9L313.5 138.7M313.5 138.7L321.5 150.6M313.5 138.7L311.0 139.7M319.6 152.5L332.4 161.1M319.6 152.5L321.5 150.6M321.5 150.6L333.4 158.6M321.5 150.6L326.6 145.5M326.6 145.5L336.2 151.9M326.6 145.5L333.7 138.4M333.7 138.4L340.0 142.6M333.7 138.4L340.8 131.3M340.8 131.3L343.9 133.4M340.8 131.3L346.0 126.1M346.0 126.1L340.8 131.3M340.8 131.3L343.9 133.4M340.8 131.3L333.7 138.4M333.7 138.4L340.0 142.6M333.7 138.4L326.6 145.5M326.6 145.5L336.2 151.9M326.6 145.5L321.5 150.6M321.5 150.6L333.4 158.6M321.5 150.6L319.6 152.5M332.4 161.1L347.5 164.1M332.4 161.1L333.4 158.6M333.4 158.6L347.5 161.4M333.4 158.6L336.2 151.9M336.2 151.9L347.5 154.1M336.2 151.9L340.0 142.6M340.0 142.6L347.5 144.1M340.0 142.6L343.9 133.4M343.9 133.4L347.5 134.1M343.9 133.4L346.7 126.6M346.7 126.6L343.9 133.4M343.9 133.4L347.5 134.1M343.9 133.4L340.0 142.6M340.0 142.6L347.5 144.1M340.0 142.6L336.2 151.9M336.2 151.9L347.5 154.1M336.2 151.9L333.4 158.6M333.4 158.6L347.5 161.4M333.4 158.6L332.4 161.1M347.5 164.1L362.6 161.1M347.5 164.1L347.5 161.4M347.5 161.4L361.6 158.6M347.5 161.4L347.5 154.1M347.5 154.1L358.8 151.9M347.5 154.1L347.5 144.1M347.5 144.1L355.0 142.6M347.5 144.1L347.5 134.1M347.5 134.1L351.1 133.4M347.5 134.1L347.5 126.8M347.5 126.8L347.5 134.1M347.5 134.1L351.1 133.4M347.5 134.1L347.5 144.1M347.5 144.1L355.0 142.6M347.5 144.1L347.5 154.1M347.5 154.1L358.8 151.9M347.5 154.1L347.5 161.4M347.5 161.4L361.6 158.6M347.5 161.4L347.5 164.1M362.6 161.1L375.4 152.5M362.6 161.1L361.6 158.6M361.6 158.6L373.5 150.6M361.6 158.6L358.8 151.9M358.8 151.9L368.4 145.5M358.8 151.9L355.0 142.6M355.0 142.6L361.3 138.4M355.0 142.6L351.1 133.4M351.1 133.4L354.2 131.3M351.1 133.4L348.3 126.6M348.3 126.6L351.1 133.4M351.1 133.4L354.2 131.3M351.1 133.4L355.0 142.6M355.0 142.6L361.3 138.4M355.0 142.6L358.8 151.9M358.8 151.9L368.4 145.5M358.8 151.9L361.6 158.6M361.6 158.6L373.5 150.6M361.6 158.6L362.6 161.1M375.4 152.5L384.0 139.7M375.4 152.5L373.5 150.6M373.5 150.6L381.5 138.7M373.5 150.6L368.4 145.5M368.4 145.5L374.8 135.9M368.4 145.5L361.3 138.4M361.3 138.4L365.5 132.1M361.3 138.4L354.2 131.3M354.2 131.3L356.3 128.2M354.2 131.3L349.0 126.1M349.0 126.1L354.2 131.3M354.2 131.3L356.3 128.2M354.2 131.3L361.3 138.4M361.3 138.4L365.5 132.1M361.3 138.4L368.4 145.5M368.4 145.5L374.8 135.9M368.4 145.5L373.5 150.6M373.5 150.6L381.5 138.7M373.5 150.6L375.4 152.5M384.0 139.7L387.0 124.6M384.0 139.7L381.5 138.7M381.5 138.7L384.3 124.6M381.5 138.7L374.8 135.9M374.8 135.9L377.0 124.6M374.8 135.9L365.5 132.1M365.5 132.1L367.0 124.6M365.5 132.1L356.3 128.2M356.3 128.2L357.0 124.6M356.3 128.2L349.5 125.4M349.5 125.4L356.3 128.2M356.3 128.2L357.0 124.6M356.3 128.2L365.5 132.1M365.5 132.1L367.0 124.6M365.5 132.1L374.8 135.9M374.8 135.9L377.0 124.6M374.8 135.9L381.5 138.7M381.5 138.7L384.3 124.6M381.5 138.7L384.0 139.7" stroke="#2e9077" stroke-width="0.55" fill="none"/>
<path d="M349.7 124.6L349.5 123.8M349.7 124.6L347.0 124.6M347.0 124.6L347.0 124.8M347.0 124.6L349.7 124.6M349.7 124.6L349.5 123.8M349.5 123.8L349.0 123.1M349.5 123.8L347.0 124.8M347.0 124.8L347.1 125.0M347.0 124.8L349.5 123.8M349.5 123.8L349.0 123.1M349.0 123.1L348.3 122.6M349.0 123.1L347.1 125.0M347.1 125.0L347.3 125.1M347.1 125.0L349.0 123.1M349.0 123.1L348.3 122.6M348.3 122.6L347.5 122.4M348.3 122.6L347.3 125.1M347.3 125.1L347.5 125.1M347.3 125.1L348.3 122.6M348.3 122.6L347.5 122.4M347.5 122.4L346.7 122.6M347.5 122.4L347.5 125.1M347.5 125.1L347.7 125.1M347.5 125.1L347.5 122.4M347.5 122.4L346.7 122.6M346.7 122.6L346.0 123.1M346.7 122.6L347.7 125.1M347.7 125.1L347.9 125.0M347.7 125.1L346.7 122.6M346.7 122.6L346.0 123.1M346.0 123.1L345.5 123.8M346.0 123.1L347.9 125.0M347.9 125.0L348.0 124.8M347.9 125.0L346.0 123.1M346.0 123.1L345.5 123.8M345.5 123.8L345.3 124.6M345.5 123.8L348.0 124.8M348.0 124.8L348.0 124.6M348.0 124.8L345.5 123.8M345.5 123.8L345.3 124.6M345.3 124.6L345.5 125.4M345.3 124.6L348.0 124.6M348.0 124.6L348.0 124.4M348.0 124.6L345.3 124.6M345.3 124.6L345.5 125.4M345.5 125.4L346.0 126.1M345.5 125.4L348.0 124.4M348.0 124.4L347.9 124.2M348.0 124.4L345.5 125.4M345.5 125.4L346.0 126.1M346.0 126.1L346.7 126.6M346.0 126.1L347.9 124.2M347.9 124.2L347.7 124.1M347.9 124.2L346.0 126.1M346.0 126.1L346.7 126.6M346.7 126.6L347.5 126.8M346.7 126.6L347.7 124.1M347.7 124.1L347.5 124.1M347.7 124.1L346.7 126.6M346.7 126.6L347.5 126.8M347.5 126.8L348.3 126.6M347.5 126.8L347.5 124.1M347.5 124.1L347.3 124.1M347.5 124.1L347.5 126.8M347.5 126.8L348.3 126.6M348.3 126.6L349.0 126.1M348.3 126.6L347.3 124.1M347.3 124.1L347.1 124.2M347.3 124.1L348.3 126.6M348.3 126.6L349.0 126.1M349.0 126.1L349.5 125.4M349.0 126.1L347.1 124.2M347.1 124.2L347.0 124.4M347.1 124.2L349.0 126.1M349.0 126.1L349.5 125.4M349.5 125.4L349.7 124.6M349.5 125.4L347.0 124.4M347.0 124.4L347.0 124.6M347.0 124.4L349.5 125.4M349.5 125.4L349.7 124.6" stroke="#1fc79e" stroke-width="0.9" fill="none"/>
<path d="M387.0 124.6h0.01M384.3 124.6h0.01M377.0 124.6h0.01M367.0 124.6h0.01M357.0 124.6h0.01M349.7 124.6h0.01M347.0 124.6h0.01M384.0 109.5h0.01M381.5 110.5h0.01M374.8 113.3h0.01M365.5 117.1h0.01M356.3 121.0h0.01M349.5 123.8h0.01M347.0 124.8h0.01M375.4 96.7h0.01M373.5 98.6h0.01M368.4 103.7h0.01M361.3 110.8h0.01M354.2 117.9h0.01M349.0 123.1h0.01M347.1 125.0h0.01M362.6 88.1h0.01M361.6 90.6h0.01M358.8 97.3h0.01M355.0 106.6h0.01M351.1 115.8h0.01M348.3 122.6h0.01M347.3 125.1h0.01M347.5 85.1h0.01M347.5 87.8h0.01M347.5 95.1h0.01M347.5 105.1h0.01M347.5 115.1h0.01M347.5 122.4h0.01M347.5 125.1h0.01M332.4 88.1h0.01M333.4 90.6h0.01M336.2 97.3h0.01M340.0 106.6h0.01M343.9 115.8h0.01M346.7 122.6h0.01M347.7 125.1h0.01M319.6 96.7h0.01M321.5 98.6h0.01M326.6 103.7h0.01M333.7 110.8h0.01M340.8 117.9h0.01M346.0 123.1h0.01M347.9 125.0h0.01M311.0 109.5h0.01M313.5 110.5h0.01M320.2 113.3h0.01M329.5 117.1h0.01M338.7 121.0h0.01M345.5 123.8h0.01M348.0 124.8h0.01M308.0 124.6h0.01M310.7 124.6h0.01M318.0 124.6h0.01M328.0 124.6h0.01M338.0 124.6h0.01M345.3 124.6h0.01M348.0 124.6h0.01M311.0 139.7h0.01M313.5 138.7h0.01M320.2 135.9h0.01M329.5 132.1h0.01M338.7 128.2h0.01M345.5 125.4h0.01M348.0 124.4h0.01M319.6 152.5h0.01M321.5 150.6h0.01M326.6 145.5h0.01M333.7 138.4h0.01M340.8 131.3h0.01M346.0 126.1h0.01M347.9 124.2h0.01M332.4 161.1h0.01M333.4 158.6h0.01M336.2 151.9h0.01M340.0 142.6h0.01M343.9 133.4h0.01M346.7 126.6h0.01M347.7 124.1h0.01M347.5 164.1h0.01M347.5 161.4h0.01M347.5 154.1h0.01M347.5 144.1h0.01M347.5 134.1h0.01M347.5 126.8h0.01M347.5 124.1h0.01M362.6 161.1h0.01M361.6 158.6h0.01M358.8 151.9h0.01M355.0 142.6h0.01M351.1 133.4h0.01M348.3 126.6h0.01M347.3 124.1h0.01M375.4 152.5h0.01M373.5 150.6h0.01M368.4 145.5h0.01M361.3 138.4h0.01M354.2 131.3h0.01M349.0 126.1h0.01M347.1 124.2h0.01M384.0 139.7h0.01M381.5 138.7h0.01M374.8 135.9h0.01M365.5 132.1h0.01M356.3 128.2h0.01M349.5 125.4h0.01M347.0 124.4h0.01" stroke="#f4fcf9" stroke-width="1.6" stroke-linecap="round" fill="none"/>
</g>
<rect x="4.40" y="209.20" width="210.80" height="177.30" fill="#3c3c3c"/>
<g clip-path="url(#c_front)">
<path d="M6.17 209.20V386.50M8.61 209.20V386.50M11.05 209.20V386.50M13.49 209.20V386.50M15.92 209.20V386.50M18.36 209.20V386.50M20.80 209.20V386.50M23.24 209.20V386.50M25.67 209.20V386.50M28.11 209.20V386.50M30.55 209.20V386.50M32.99 209.20V386.50M35.42 209.20V386.50M37.86 209.20V386.50M42.74 209.20V386.50M45.17 209.20V386.50M47.61 209.20V386.50M50.05 209.20V386.50M52.49 209.20V386.50M54.92 209.20V386.50M57.36 209.20V386.50M59.80 209.20V386.50M62.24 209.20V386.50M64.67 209.20V386.50M67.11 209.20V386.50M69.55 209.20V386.50M71.99 209.20V386.50M74.42 209.20V386.50M76.86 209.20V386.50M81.74 209.20V386.50M84.17 209.20V386.50M86.61 209.20V386.50M89.05 209.20V386.50M91.49 209.20V386.50M93.92 209.20V386.50M96.36 209.20V386.50M98.80 209.20V386.50M101.24 209.20V386.50M103.67 209.20V386.50M106.11 209.20V386.50M108.55 209.20V386.50M110.99 209.20V386.50M113.42 209.20V386.50M115.86 209.20V386.50M120.74 209.20V386.50M123.17 209.20V386.50M125.61 209.20V386.50M128.05 209.20V386.50M130.49 209.20V386.50M132.93 209.20V386.50M135.36 209.20V386.50M137.80 209.20V386.50M140.24 209.20V386.50M142.68 209.20V386.50M145.11 209.20V386.50M147.55 209.20V386.50M149.99 209.20V386.50M152.43 209.20V386.50M154.86 209.20V386.50M159.74 209.20V386.50M162.18 209.20V386.50M164.61 209.20V386.50M167.05 209.20V386.50M169.49 209.20V386.50M171.93 209.20V386.50M174.36 209.20V386.50M176.80 209.20V386.50M179.24 209.20V386.50M181.68 209.20V386.50M184.11 209.20V386.50M186.55 209.20V386.50M188.99 209.20V386.50M191.43 209.20V386.50M193.86 209.20V386.50M198.74 209.20V386.50M201.18 209.20V386.50M203.61 209.20V386.50M206.05 209.20V386.50M208.49 209.20V386.50M210.93 209.20V386.50M213.36 209.20V386.50M4.40 210.02H215.20M4.40 212.46H215.20M4.40 217.34H215.20M4.40 219.77H215.20M4.40 222.21H215.20M4.40 224.65H215.20M4.40 227.09H215.20M4.40 229.52H215.20M4.40 231.96H215.20M4.40 234.40H215.20M4.40 236.84H215.20M4.40 239.27H215.20M4.40 241.71H215.20M4.40 244.15H215.20M4.40 246.59H215.20M4.40 249.02H215.20M4.40 251.46H215.20M4.40 256.34H215.20M4.40 258.77H215.20M4.40 261.21H215.20M4.40 263.65H215.20M4.40 266.09H215.20M4.40 268.52H215.20M4.40 270.96H215.20M4.40 273.40H215.20M4.40 275.84H215.20M4.40 278.27H215.20M4.40 280.71H215.20M4.40 283.15H215.20M4.40 285.59H215.20M4.40 288.02H215.20M4.40 290.46H215.20M4.40 295.34H215.20M4.40 297.77H215.20M4.40 300.21H215.20M4.40 302.65H215.20M4.40 305.09H215.20M4.40 307.52H215.20M4.40 309.96H215.20M4.40 312.40H215.20M4.40 314.84H215.20M4.40 317.27H215.20M4.40 319.71H215.20M4.40 322.15H215.20M4.40 324.59H215.20M4.40 327.02H215.20M4.40 329.46H215.20M4.40 334.34H215.20M4.40 336.77H215.20M4.40 339.21H215.20M4.40 341.65H215.20M4.40 344.09H215.20M4.40 346.52H215.20M4.40 348.96H215.20M4.40 351.40H215.20M4.40 353.84H215.20M4.40 356.27H215.20M4.40 358.71H215.20M4.40 361.15H215.20M4.40 363.59H215.20M4.40 366.02H215.20M4.40 368.46H215.20M4.40 373.34H215.20M4.40 375.77H215.20M4.40 378.21H215.20M4.40 380.65H215.20M4.40 383.09H215.20M4.40 385.52H215.20" stroke="#4a4a4a" stroke-width="0.8" fill="none"/><path d="M40.30 209.20V386.50M79.30 209.20V386.50M157.30 209.20V386.50M196.30 209.20V386.50M4.40 214.90H215.20M4.40 253.90H215.20M4.40 331.90H215.20M4.40 370.90H215.20" stroke="#565656" stroke-width="0.7" fill="none"/><path d="M118.30 209.20V386.50M4.40 292.90H215.20" stroke="#b6b6b6" stroke-width="0.85" fill="none"/>
<path d="M157.8 292.9L154.8 292.9M157.8 292.9L155.1 282.9M155.1 282.9L152.3 282.9M155.1 282.9L147.8 275.6M147.8 275.6L145.6 275.6M147.8 275.6L137.8 272.9M137.8 272.9L136.3 272.9M137.8 272.9L127.8 275.6M127.8 275.6L127.1 275.6M127.8 275.6L120.5 282.9M120.5 302.9L127.8 310.2M127.8 310.2L127.1 310.2M127.8 310.2L137.8 312.9M137.8 312.9L136.3 312.9M137.8 312.9L147.8 310.2M147.8 310.2L145.6 310.2M147.8 310.2L155.1 302.9M155.1 302.9L152.3 302.9M155.1 302.9L157.8 292.9M154.8 292.9L146.2 292.9M154.8 292.9L152.3 282.9M152.3 282.9L144.3 282.9M152.3 282.9L145.6 275.6M145.6 275.6L139.2 275.6M145.6 275.6L136.3 272.9M136.3 272.9L132.1 272.9M136.3 272.9L127.1 275.6M127.1 275.6L125.0 275.6M127.1 275.6L120.3 282.9M120.3 302.9L127.1 310.2M127.1 310.2L125.0 310.2M127.1 310.2L136.3 312.9M136.3 312.9L132.1 312.9M136.3 312.9L145.6 310.2M145.6 310.2L139.2 310.2M145.6 310.2L152.3 302.9M152.3 302.9L144.3 302.9M152.3 302.9L154.8 292.9M146.2 292.9L133.4 292.9M146.2 292.9L144.3 282.9M144.3 282.9L132.4 282.9M144.3 282.9L139.2 275.6M139.2 275.6L129.6 275.6M139.2 275.6L132.1 272.9M132.1 272.9L125.8 272.9M132.1 272.9L125.0 275.6M125.0 275.6L121.9 275.6M125.0 275.6L119.8 282.9M119.8 302.9L125.0 310.2M125.0 310.2L121.9 310.2M125.0 310.2L132.1 312.9M132.1 312.9L125.8 312.9M132.1 312.9L139.2 310.2M139.2 310.2L129.6 310.2M139.2 310.2L144.3 302.9M144.3 302.9L132.4 302.9M144.3 302.9L146.2 292.9M133.4 292.9L118.3 292.9M133.4 292.9L132.4 282.9M132.4 282.9L118.3 282.9M132.4 282.9L129.6 275.6M129.6 275.6L118.3 275.6M129.6 275.6L125.8 272.9M125.8 272.9L118.3 272.9M125.8 272.9L121.9 275.6M121.9 275.6L118.3 275.6M121.9 275.6L119.1 282.9M119.1 302.9L121.9 310.2M121.9 310.2L118.3 310.2M121.9 310.2L125.8 312.9M125.8 312.9L118.3 312.9M125.8 312.9L129.6 310.2M129.6 310.2L118.3 310.2M129.6 310.2L132.4 302.9M132.4 302.9L118.3 302.9M132.4 302.9L133.4 292.9M118.3 292.9L103.2 292.9M118.3 292.9L118.3 282.9M118.3 282.9L104.2 282.9M118.3 282.9L118.3 275.6M118.3 275.6L107.0 275.6M118.3 275.6L118.3 272.9M118.3 272.9L110.8 272.9M118.3 272.9L118.3 275.6M118.3 275.6L114.7 275.6M118.3 275.6L118.3 282.9M118.3 302.9L118.3 310.2M118.3 310.2L114.7 310.2M118.3 310.2L118.3 312.9M118.3 312.9L110.8 312.9M118.3 312.9L118.3 310.2M118.3 310.2L107.0 310.2M118.3 310.2L118.3 302.9M118.3 302.9L104.2 302.9M118.3 302.9L118.3 292.9M103.2 292.9L90.4 292.9M103.2 292.9L104.2 282.9M104.2 282.9L92.3 282.9M104.2 282.9L107.0 275.6M107.0 275.6L97.4 275.6M107.0 275.6L110.8 272.9M110.8 272.9L104.5 272.9M110.8 272.9L114.7 275.6M114.7 275.6L111.6 275.6M114.7 275.6L117.5 282.9M117.5 302.9L114.7 310.2M114.7 310.2L111.6 310.2M114.7 310.2L110.8 312.9M110.8 312.9L104.5 312.9M110.8 312.9L107.0 310.2M107.0 310.2L97.4 310.2M107.0 310.2L104.2 302.9M104.2 302.9L92.3 302.9M104.2 302.9L103.2 292.9M90.4 292.9L81.8 292.9M90.4 292.9L92.3 282.9M92.3 282.9L84.3 282.9M92.3 282.9L97.4 275.6M97.4 275.6L91.0 275.6M97.4 275.6L104.5 272.9M104.5 272.9L100.3 272.9M104.5 272.9L111.6 275.6M111.6 275.6L109.5 275.6M111.6 275.6L116.8 282.9M116.8 302.9L111.6 310.2M111.6 310.2L109.5 310.2M111.6 310.2L104.5 312.9M104.5 312.9L100.3 312.9M104.5 312.9L97.4 310.2M97.4 310.2L91.0 310.2M97.4 310.2L92.3 302.9M92.3 302.9L84.3 302.9M92.3 302.9L90.4 292.9M81.8 292.9L78.8 292.9M81.8 292.9L84.3 282.9M84.3 282.9L81.5 282.9M84.3 282.9L91.0 275.6M91.0 275.6L88.8 275.6M91.0 275.6L100.3 272.9M100.3 272.9L98.8 272.9M100.3 272.9L109.5 275.6M109.5 275.6L108.8 275.6M109.5 275.6L116.3 282.9M116.3 302.9L109.5 310.2M109.5 310.2L108.8 310.2M109.5 310.2L100.3 312.9M100.3 312.9L98.8 312.9M100.3 312.9L91.0 310.2M91.0 310.2L88.8 310.2M91.0 310.2L84.3 302.9M84.3 302.9L81.5 302.9M84.3 302.9L81.8 292.9M78.8 292.9L81.8 292.9M78.8 292.9L81.5 282.9M81.5 282.9L84.3 282.9M81.5 282.9L88.8 275.6M88.8 275.6L91.0 275.6M88.8 275.6L98.8 272.9M98.8 272.9L100.3 272.9M98.8 272.9L108.8 275.6M108.8 275.6L109.5 275.6M108.8 275.6L116.1 282.9M116.1 302.9L108.8 310.2M108.8 310.2L109.5 310.2M108.8 310.2L98.8 312.9M98.8 312.9L100.3 312.9M98.8 312.9L88.8 310.2M88.8 310.2L91.0 310.2M88.8 310.2L81.5 302.9M81.5 302.9L84.3 302.9M81.5 302.9L78.8 292.9M81.8 292.9L90.4 292.9M81.8 292.9L84.3 282.9M84.3 282.9L92.3 282.9M84.3 282.9L91.0 275.6M91.0 275.6L97.4 275.6M91.0 275.6L100.3 272.9M100.3 272.9L104.5 272.9M100.3 272.9L109.5 275.6M109.5 275.6L111.6 275.6M109.5 275.6L116.3 282.9M116.3 302.9L109.5 310.2M109.5 310.2L111.6 310.2M109.5 310.2L100.3 312.9M100.3 312.9L104.5 312.9M100.3 312.9L91.0 310.2M91.0 310.2L97.4 310.2M91.0 310.2L84.3 302.9M84.3 302.9L92.3 302.9M84.3 302.9L81.8 292.9M90.4 292.9L103.2 292.9M90.4 292.9L92.3 282.9M92.3 282.9L104.2 282.9M92.3 282.9L97.4 275.6M97.4 275.6L107.0 275.6M97.4 275.6L104.5 272.9M104.5 272.9L110.8 272.9M104.5 272.9L111.6 275.6M111.6 275.6L114.7 275.6M111.6 275.6L116.8 282.9M116.8 302.9L111.6 310.2M111.6 310.2L114.7 310.2M111.6 310.2L104.5 312.9M104.5 312.9L110.8 312.9M104.5 312.9L97.4 310.2M97.4 310.2L107.0 310.2M97.4 310.2L92.3 302.9M92.3 302.9L104.2 302.9M92.3 302.9L90.4 292.9M103.2 292.9L118.3 292.9M103.2 292.9L104.2 282.9M104.2 282.9L118.3 282.9M104.2 282.9L107.0 275.6M107.0 275.6L118.3 275.6M107.0 275.6L110.8 272.9M110.8 272.9L118.3 272.9M110.8 272.9L114.7 275.6M114.7 275.6L118.3 275.6M114.7 275.6L117.5 282.9M117.5 302.9L114.7 310.2M114.7 310.2L118.3 310.2M114.7 310.2L110.8 312.9M110.8 312.9L118.3 312.9M110.8 312.9L107.0 310.2M107.0 310.2L118.3 310.2M107.0 310.2L104.2 302.9M104.2 302.9L118.3 302.9M104.2 302.9L103.2 292.9M118.3 292.9L133.4 292.9M118.3 292.9L118.3 282.9M118.3 282.9L132.4 282.9M118.3 282.9L118.3 275.6M118.3 275.6L129.6 275.6M118.3 275.6L118.3 272.9M118.3 272.9L125.8 272.9M118.3 272.9L118.3 275.6M118.3 275.6L121.9 275.6M118.3 275.6L118.3 282.9M118.3 302.9L118.3 310.2M118.3 310.2L121.9 310.2M118.3 310.2L118.3 312.9M118.3 312.9L125.8 312.9M118.3 312.9L118.3 310.2M118.3 310.2L129.6 310.2M118.3 310.2L118.3 302.9M118.3 302.9L132.4 302.9M118.3 302.9L118.3 292.9M133.4 292.9L146.2 292.9M133.4 292.9L132.4 282.9M132.4 282.9L144.3 282.9M132.4 282.9L129.6 275.6M129.6 275.6L139.2 275.6M129.6 275.6L125.8 272.9M125.8 272.9L132.1 272.9M125.8 272.9L121.9 275.6M121.9 275.6L125.0 275.6M121.9 275.6L119.1 282.9M119.1 302.9L121.9 310.2M121.9 310.2L125.0 310.2M121.9 310.2L125.8 312.9M125.8 312.9L132.1 312.9M125.8 312.9L129.6 310.2M129.6 310.2L139.2 310.2M129.6 310.2L132.4 302.9M132.4 302.9L144.3 302.9M132.4 302.9L133.4 292.9M146.2 292.9L154.8 292.9M146.2 292.9L144.3 282.9M144.3 282.9L152.3 282.9M144.3 282.9L139.2 275.6M139.2 275.6L145.6 275.6M139.2 275.6L132.1 272.9M132.1 272.9L136.3 272.9M132.1 272.9L125.0 275.6M125.0 275.6L127.1 275.6M125.0 275.6L119.8 282.9M119.8 302.9L125.0 310.2M125.0 310.2L127.1 310.2M125.0 310.2L132.1 312.9M132.1 312.9L136.3 312.9M132.1 312.9L139.2 310.2M139.2 310.2L145.6 310.2M139.2 310.2L144.3 302.9M144.3 302.9L152.3 302.9M144.3 302.9L146.2 292.9M154.8 292.9L157.8 292.9M154.8 292.9L152.3 282.9M152.3 282.9L155.1 282.9M152.3 282.9L145.6 275.6M145.6 275.6L147.8 275.6M145.6 275.6L136.3 272.9M136.3 272.9L137.8 272.9M136.3 272.9L127.1 275.6M127.1 275.6L127.8 275.6M127.1 275.6L120.3 282.9M120.3 302.9L127.1 310.2M127.1 310.2L127.8 310.2M127.1 310.2L136.3 312.9M136.3 312.9L137.8 312.9M136.3 312.9L145.6 310.2M145.6 310.2L147.8 310.2M145.6 310.2L152.3 302.9M152.3 302.9L155.1 302.9M152.3 302.9L154.8 292.9" stroke="#2e9077" stroke-width="0.55" fill="none"/>
<path d="M120.5 282.9L120.3 282.9M120.5 282.9L117.8 292.9M117.8 292.9L117.8 292.9M117.8 292.9L120.5 302.9M120.5 302.9L120.3 302.9M120.3 282.9L119.8 282.9M120.3 282.9L117.8 292.9M117.8 292.9L117.9 292.9M117.8 292.9L120.3 302.9M120.3 302.9L119.8 302.9M119.8 282.9L119.1 282.9M119.8 282.9L117.9 292.9M117.9 292.9L118.1 292.9M117.9 292.9L119.8 302.9M119.8 302.9L119.1 302.9M119.1 282.9L118.3 282.9M119.1 282.9L118.1 292.9M118.1 292.9L118.3 292.9M118.1 292.9L119.1 302.9M119.1 302.9L118.3 302.9M118.3 282.9L117.5 282.9M118.3 282.9L118.3 292.9M118.3 292.9L118.5 292.9M118.3 292.9L118.3 302.9M118.3 302.9L117.5 302.9M117.5 282.9L116.8 282.9M117.5 282.9L118.5 292.9M118.5 292.9L118.7 292.9M118.5 292.9L117.5 302.9M117.5 302.9L116.8 302.9M116.8 282.9L116.3 282.9M116.8 282.9L118.7 292.9M118.7 292.9L118.8 292.9M118.7 292.9L116.8 302.9M116.8 302.9L116.3 302.9M116.3 282.9L116.1 282.9M116.3 282.9L118.8 292.9M118.8 292.9L118.8 292.9M118.8 292.9L116.3 302.9M116.3 302.9L116.1 302.9M116.1 282.9L116.3 282.9M116.1 282.9L118.8 292.9M118.8 292.9L118.8 292.9M118.8 292.9L116.1 302.9M116.1 302.9L116.3 302.9M116.3 282.9L116.8 282.9M116.3 282.9L118.8 292.9M118.8 292.9L118.7 292.9M118.8 292.9L116.3 302.9M116.3 302.9L116.8 302.9M116.8 282.9L117.5 282.9M116.8 282.9L118.7 292.9M118.7 292.9L118.5 292.9M118.7 292.9L116.8 302.9M116.8 302.9L117.5 302.9M117.5 282.9L118.3 282.9M117.5 282.9L118.5 292.9M118.5 292.9L118.3 292.9M118.5 292.9L117.5 302.9M117.5 302.9L118.3 302.9M118.3 282.9L119.1 282.9M118.3 282.9L118.3 292.9M118.3 292.9L118.1 292.9M118.3 292.9L118.3 302.9M118.3 302.9L119.1 302.9M119.1 282.9L119.8 282.9M119.1 282.9L118.1 292.9M118.1 292.9L117.9 292.9M118.1 292.9L119.1 302.9M119.1 302.9L119.8 302.9M119.8 282.9L120.3 282.9M119.8 282.9L117.9 292.9M117.9 292.9L117.8 292.9M117.9 292.9L119.8 302.9M119.8 302.9L120.3 302.9M120.3 282.9L120.5 282.9M120.3 282.9L117.8 292.9M117.8 292.9L117.8 292.9M117.8 292.9L120.3 302.9M120.3 302.9L120.5 302.9" stroke="#1fc79e" stroke-width="0.9" fill="none"/>
<path d="M157.8 292.9h0.01M155.1 282.9h0.01M147.8 275.6h0.01M137.8 272.9h0.01M127.8 275.6h0.01M120.5 282.9h0.01M117.8 292.9h0.01M120.5 302.9h0.01M127.8 310.2h0.01M137.8 312.9h0.01M147.8 310.2h0.01M155.1 302.9h0.01M154.8 292.9h0.01M152.3 282.9h0.01M145.6 275.6h0.01M136.3 272.9h0.01M127.1 275.6h0.01M120.3 282.9h0.01M120.3 302.9h0.01M127.1 310.2h0.01M136.3 312.9h0.01M145.6 310.2h0.01M152.3 302.9h0.01M146.2 292.9h0.01M144.3 282.9h0.01M139.2 275.6h0.01M132.1 272.9h0.01M125.0 275.6h0.01M119.8 282.9h0.01M117.9 292.9h0.01M119.8 302.9h0.01M125.0 310.2h0.01M132.1 312.9h0.01M139.2 310.2h0.01M144.3 302.9h0.01M133.4 292.9h0.01M132.4 282.9h0.01M129.6 275.6h0.01M125.8 272.9h0.01M121.9 275.6h0.01M119.1 282.9h0.01M118.1 292.9h0.01M119.1 302.9h0.01M121.9 310.2h0.01M125.8 312.9h0.01M129.6 310.2h0.01M132.4 302.9h0.01M118.3 292.9h0.01M118.3 282.9h0.01M118.3 275.6h0.01M118.3 272.9h0.01M118.3 302.9h0.01M118.3 310.2h0.01M118.3 312.9h0.01M103.2 292.9h0.01M104.2 282.9h0.01M107.0 275.6h0.01M110.8 272.9h0.01M114.7 275.6h0.01M117.5 282.9h0.01M118.5 292.9h0.01M117.5 302.9h0.01M114.7 310.2h0.01M110.8 312.9h0.01M107.0 310.2h0.01M104.2 302.9h0.01M90.4 292.9h0.01M92.3 282.9h0.01M97.4 275.6h0.01M104.5 272.9h0.01M111.6 275.6h0.01M116.8 282.9h0.01M118.7 292.9h0.01M116.8 302.9h0.01M111.6 310.2h0.01M104.5 312.9h0.01M97.4 310.2h0.01M92.3 302.9h0.01M81.8 292.9h0.01M84.3 282.9h0.01M91.0 275.6h0.01M100.3 272.9h0.01M109.5 275.6h0.01M116.3 282.9h0.01M118.8 292.9h0.01M116.3 302.9h0.01M109.5 310.2h0.01M100.3 312.9h0.01M91.0 310.2h0.01M84.3 302.9h0.01M78.8 292.9h0.01M81.5 282.9h0.01M88.8 275.6h0.01M98.8 272.9h0.01M108.8 275.6h0.01M116.1 282.9h0.01M116.1 302.9h0.01M108.8 310.2h0.01M98.8 312.9h0.01M88.8 310.2h0.01M81.5 302.9h0.01" stroke="#f4fcf9" stroke-width="1.6" stroke-linecap="round" fill="none"/>
</g>
<rect x="218.50" y="209.20" width="257.00" height="177.30" fill="#3c3c3c"/>
<g clip-path="url(#c_left)">
<path d="M220.75 209.20V386.50M223.19 209.20V386.50M225.62 209.20V386.50M228.06 209.20V386.50M232.94 209.20V386.50M235.38 209.20V386.50M237.81 209.20V386.50M240.25 209.20V386.50M242.69 209.20V386.50M245.12 209.20V386.50M247.56 209.20V386.50M250.00 209.20V386.50M252.44 209.20V386.50M254.88 209.20V386.50M257.31 209.20V386.50M259.75 209.20V386.50M262.19 209.20V386.50M264.62 209.20V386.50M267.06 209.20V386.50M271.94 209.20V386.50M274.38 209.20V386.50M276.81 209.20V386.50M279.25 209.20V386.50M281.69 209.20V386.50M284.12 209.20V386.50M286.56 209.20V386.50M289.00 209.20V386.50M291.44 209.20V386.50M293.88 209.20V386.50M296.31 209.20V386.50M298.75 209.20V386.50M301.19 209.20V386.50M303.62 209.20V386.50M306.06 209.20V386.50M310.94 209.20V386.50M313.38 209.20V386.50M315.81 209.20V386.50M318.25 209.20V386.50M320.69 209.20V386.50M323.12 209.20V386.50M325.56 209.20V386.50M328.00 209.20V386.50M330.44 209.20V386.50M332.88 209.20V386.50M335.31 209.20V386.50M337.75 209.20V386.50M340.19 209.20V386.50M342.62 209.20V386.50M345.06 209.20V386.50M349.94 209.20V386.50M352.38 209.20V386.50M354.81 209.20V386.50M357.25 209.20V386.50M359.69 209.20V386.50M362.12 209.20V386.50M364.56 209.20V386.50M367.00 209.20V386.50M369.44 209.20V386.50M371.88 209.20V386.50M374.31 209.20V386.50M376.75 209.20V386.50M379.19 209.20V386.50M381.62 209.20V386.50M384.06 209.20V386.50M388.94 209.20V386.50M391.38 209.20V386.50M393.81 209.20V386.50M396.25 209.20V386.50M398.69 209.20V386.50M401.12 209.20V386.50M403.56 209.20V386.50M406.00 209.20V386.50M408.44 209.20V386.50M410.88 209.20V386.50M413.31 209.20V386.50M415.75 209.20V386.50M418.19 209.20V386.50M420.62 209.20V386.50M423.06 209.20V386.50M427.94 209.20V386.50M430.38 209.20V386.50M432.81 209.20V386.50M435.25 209.20V386.50M437.69 209.20V386.50M440.12 209.20V386.50M442.56 209.20V386.50M445.00 209.20V386.50M447.44 209.20V386.50M449.88 209.20V386.50M452.31 209.20V386.50M454.75 209.20V386.50M457.19 209.20V386.50M459.62 209.20V386.50M462.06 209.20V386.50M466.94 209.20V386.50M469.38 209.20V386.50M471.81 209.20V386.50M474.25 209.20V386.50M218.50 210.45H475.50M218.50 212.89H475.50M218.50 215.32H475.50M218.50 217.76H475.50M218.50 222.64H475.50M218.50 225.07H475.50M218.50 227.51H475.50M218.50 229.95H475.50M218.50 232.39H475.50M218.50 234.82H475.50M218.50 237.26H475.50M218.50 239.70H475.50M218.50 242.14H475.50M218.50 244.57H475.50M218.50 247.01H475.50M218.50 249.45H475.50M218.50 251.89H475.50M218.50 254.32H475.50M218.50 256.76H475.50M218.50 261.64H475.50M218.50 264.07H475.50M218.50 266.51H475.50M218.50 268.95H475.50M218.50 271.39H475.50M218.50 273.82H475.50M218.50 276.26H475.50M218.50 278.70H475.50M218.50 281.14H475.50M218.50 283.57H475.50M218.50 286.01H475.50M218.50 288.45H475.50M218.50 290.89H475.50M218.50 293.32H475.50M218.50 295.76H475.50M218.50 300.64H475.50M218.50 303.07H475.50M218.50 305.51H475.50M218.50 307.95H475.50M218.50 310.39H475.50M218.50 312.82H475.50M218.50 315.26H475.50M218.50 317.70H475.50M218.50 320.14H475.50M218.50 322.57H475.50M218.50 325.01H475.50M218.50 327.45H475.50M218.50 329.89H475.50M218.50 332.32H475.50M218.50 334.76H475.50M218.50 339.64H475.50M218.50 342.07H475.50M218.50 344.51H475.50M218.50 346.95H475.50M218.50 349.39H475.50M218.50 351.82H475.50M218.50 354.26H475.50M218.50 356.70H475.50M218.50 359.14H475.50M218.50 361.57H475.50M218.50 364.01H475.50M218.50 366.45H475.50M218.50 368.89H475.50M218.50 371.32H475.50M218.50 373.76H475.50M218.50 378.64H475.50M218.50 381.07H475.50M218.50 383.51H475.50M218.50 385.95H475.50" stroke="#4a4a4a" stroke-width="0.8" fill="none"/><path d="M230.50 209.20V386.50M269.50 209.20V386.50M308.50 209.20V386.50M386.50 209.20V386.50M425.50 209.20V386.50M464.50 209.20V386.50M218.50 220.20H475.50M218.50 259.20H475.50M218.50 337.20H475.50M218.50 376.20H475.50" stroke="#565656" stroke-width="0.7" fill="none"/><path d="M347.50 209.20V386.50M218.50 298.20H475.50" stroke="#b6b6b6" stroke-width="0.85" fill="none"/>
<path d="M347.5 298.2L362.6 298.2M347.5 298.2L347.5 288.2M347.5 288.2L361.6 288.2M347.5 288.2L347.5 280.9M347.5 280.9L358.8 280.9M347.5 280.9L347.5 278.2M347.5 278.2L355.0 278.2M347.5 278.2L347.5 280.9M347.5 280.9L351.1 280.9M347.5 280.9L347.5 288.2M347.5 308.2L347.5 315.5M347.5 315.5L351.1 315.5M347.5 315.5L347.5 318.2M347.5 318.2L355.0 318.2M347.5 318.2L347.5 315.5M347.5 315.5L358.8 315.5M347.5 315.5L347.5 308.2M347.5 308.2L361.6 308.2M347.5 308.2L347.5 298.2M362.6 298.2L375.4 298.2M362.6 298.2L361.6 288.2M361.6 288.2L373.5 288.2M361.6 288.2L358.8 280.9M358.8 280.9L368.4 280.9M358.8 280.9L355.0 278.2M355.0 278.2L361.3 278.2M355.0 278.2L351.1 280.9M351.1 280.9L354.2 280.9M351.1 280.9L348.3 288.2M348.3 308.2L351.1 315.5M351.1 315.5L354.2 315.5M351.1 315.5L355.0 318.2M355.0 318.2L361.3 318.2M355.0 318.2L358.8 315.5M358.8 315.5L368.4 315.5M358.8 315.5L361.6 308.2M361.6 308.2L373.5 308.2M361.6 308.2L362.6 298.2M375.4 298.2L384.0 298.2M375.4 298.2L373.5 288.2M373.5 288.2L381.5 288.2M373.5 288.2L368.4 280.9M368.4 280.9L374.8 280.9M368.4 280.9L361.3 278.2M361.3 278.2L365.5 278.2M361.3 278.2L354.2 280.9M354.2 280.9L356.3 280.9M354.2 280.9L349.0 288.2M349.0 308.2L354.2 315.5M354.2 315.5L356.3 315.5M354.2 315.5L361.3 318.2M361.3 318.2L365.5 318.2M361.3 318.2L368.4 315.5M368.4 315.5L374.8 315.5M368.4 315.5L373.5 308.2M373.5 308.2L381.5 308.2M373.5 308.2L375.4 298.2M384.0 298.2L387.0 298.2M384.0 298.2L381.5 288.2M381.5 288.2L384.3 288.2M381.5 288.2L374.8 280.9M374.8 280.9L377.0 280.9M374.8 280.9L365.5 278.2M365.5 278.2L367.0 278.2M365.5 278.2L356.3 280.9M356.3 280.9L357.0 280.9M356.3 280.9L349.5 288.2M349.5 308.2L356.3 315.5M356.3 315.5L357.0 315.5M356.3 315.5L365.5 318.2M365.5 318.2L367.0 318.2M365.5 318.2L374.8 315.5M374.8 315.5L377.0 315.5M374.8 315.5L381.5 308.2M381.5 308.2L384.3 308.2M381.5 308.2L384.0 298.2M387.0 298.2L384.0 298.2M387.0 298.2L384.3 288.2M384.3 288.2L381.5 288.2M384.3 288.2L377.0 280.9M377.0 280.9L374.8 280.9M377.0 280.9L367.0 278.2M367.0 278.2L365.5 278.2M367.0 278.2L357.0 280.9M357.0 280.9L356.3 280.9M357.0 280.9L349.7 288.2M349.7 308.2L357.0 315.5M357.0 315.5L356.3 315.5M357.0 315.5L367.0 318.2M367.0 318.2L365.5 318.2M367.0 318.2L377.0 315.5M377.0 315.5L374.8 315.5M377.0 315.5L384.3 308.2M384.3 308.2L381.5 308.2M384.3 308.2L387.0 298.2M384.0 298.2L375.4 298.2M384.0 298.2L381.5 288.2M381.5 288.2L373.5 288.2M381.5 288.2L374.8 280.9M374.8 280.9L368.4 280.9M374.8 280.9L365.5 278.2M365.5 278.2L361.3 278.2M365.5 278.2L356.3 280.9M356.3 280.9L354.2 280.9M356.3 280.9L349.5 288.2M349.5 308.2L356.3 315.5M356.3 315.5L354.2 315.5M356.3 315.5L365.5 318.2M365.5 318.2L361.3 318.2M365.5 318.2L374.8 315.5M374.8 315.5L368.4 315.5M374.8 315.5L381.5 308.2M381.5 308.2L373.5 308.2M381.5 308.2L384.0 298.2M375.4 298.2L362.6 298.2M375.4 298.2L373.5 288.2M373.5 288.2L361.6 288.2M373.5 288.2L368.4 280.9M368.4 280.9L358.8 280.9M368.4 280.9L361.3 278.2M361.3 278.2L355.0 278.2M361.3 278.2L354.2 280.9M354.2 280.9L351.1 280.9M354.2 280.9L349.0 288.2M349.0 308.2L354.2 315.5M354.2 315.5L351.1 315.5M354.2 315.5L361.3 318.2M361.3 318.2L355.0 318.2M361.3 318.2L368.4 315.5M368.4 315.5L358.8 315.5M368.4 315.5L373.5 308.2M373.5 308.2L361.6 308.2M373.5 308.2L375.4 298.2M362.6 298.2L347.5 298.2M362.6 298.2L361.6 288.2M361.6 288.2L347.5 288.2M361.6 288.2L358.8 280.9M358.8 280.9L347.5 280.9M358.8 280.9L355.0 278.2M355.0 278.2L347.5 278.2M355.0 278.2L351.1 280.9M351.1 280.9L347.5 280.9M351.1 280.9L348.3 288.2M348.3 308.2L351.1 315.5M351.1 315.5L347.5 315.5M351.1 315.5L355.0 318.2M355.0 318.2L347.5 318.2M355.0 318.2L358.8 315.5M358.8 315.5L347.5 315.5M358.8 315.5L361.6 308.2M361.6 308.2L347.5 308.2M361.6 308.2L362.6 298.2M347.5 298.2L332.4 298.2M347.5 298.2L347.5 288.2M347.5 288.2L333.4 288.2M347.5 288.2L347.5 280.9M347.5 280.9L336.2 280.9M347.5 280.9L347.5 278.2M347.5 278.2L340.0 278.2M347.5 278.2L347.5 280.9M347.5 280.9L343.9 280.9M347.5 280.9L347.5 288.2M347.5 308.2L347.5 315.5M347.5 315.5L343.9 315.5M347.5 315.5L347.5 318.2M347.5 318.2L340.0 318.2M347.5 318.2L347.5 315.5M347.5 315.5L336.2 315.5M347.5 315.5L347.5 308.2M347.5 308.2L333.4 308.2M347.5 308.2L347.5 298.2M332.4 298.2L319.6 298.2M332.4 298.2L333.4 288.2M333.4 288.2L321.5 288.2M333.4 288.2L336.2 280.9M336.2 280.9L326.6 280.9M336.2 280.9L340.0 278.2M340.0 278.2L333.7 278.2M340.0 278.2L343.9 280.9M343.9 280.9L340.8 280.9M343.9 280.9L346.7 288.2M346.7 308.2L343.9 315.5M343.9 315.5L340.8 315.5M343.9 315.5L340.0 318.2M340.0 318.2L333.7 318.2M340.0 318.2L336.2 315.5M336.2 315.5L326.6 315.5M336.2 315.5L333.4 308.2M333.4 308.2L321.5 308.2M333.4 308.2L332.4 298.2M319.6 298.2L311.0 298.2M319.6 298.2L321.5 288.2M321.5 288.2L313.5 288.2M321.5 288.2L326.6 280.9M326.6 280.9L320.2 280.9M326.6 280.9L333.7 278.2M333.7 278.2L329.5 278.2M333.7 278.2L340.8 280.9M340.8 280.9L338.7 280.9M340.8 280.9L346.0 288.2M346.0 308.2L340.8 315.5M340.8 315.5L338.7 315.5M340.8 315.5L333.7 318.2M333.7 318.2L329.5 318.2M333.7 318.2L326.6 315.5M326.6 315.5L320.2 315.5M326.6 315.5L321.5 308.2M321.5 308.2L313.5 308.2M321.5 308.2L319.6 298.2M311.0 298.2L308.0 298.2M311.0 298.2L313.5 288.2M313.5 288.2L310.7 288.2M313.5 288.2L320.2 280.9M320.2 280.9L318.0 280.9M320.2 280.9L329.5 278.2M329.5 278.2L328.0 278.2M329.5 278.2L338.7 280.9M338.7 280.9L338.0 280.9M338.7 280.9L345.5 288.2M345.5 308.2L338.7 315.5M338.7 315.5L338.0 315.5M338.7 315.5L329.5 318.2M329.5 318.2L328.0 318.2M329.5 318.2L320.2 315.5M320.2 315.5L318.0 315.5M320.2 315.5L313.5 308.2M313.5 308.2L310.7 308.2M313.5 308.2L311.0 298.2M308.0 298.2L311.0 298.2M308.0 298.2L310.7 288.2M310.7 288.2L313.5 288.2M310.7 288.2L318.0 280.9M318.0 280.9L320.2 280.9M318.0 280.9L328.0 278.2M328.0 278.2L329.5 278.2M328.0 278.2L338.0 280.9M338.0 280.9L338.7 280.9M338.0 280.9L345.3 288.2M345.3 308.2L338.0 315.5M338.0 315.5L338.7 315.5M338.0 315.5L328.0 318.2M328.0 318.2L329.5 318.2M328.0 318.2L318.0 315.5M318.0 315.5L320.2 315.5M318.0 315.5L310.7 308.2M310.7 308.2L313.5 308.2M310.7 308.2L308.0 298.2M311.0 298.2L319.6 298.2M311.0 298.2L313.5 288.2M313.5 288.2L321.5 288.2M313.5 288.2L320.2 280.9M320.2 280.9L326.6 280.9M320.2 280.9L329.5 278.2M329.5 278.2L333.7 278.2M329.5 278.2L338.7 280.9M338.7 280.9L340.8 280.9M338.7 280.9L345.5 288.2M345.5 308.2L338.7 315.5M338.7 315.5L340.8 315.5M338.7 315.5L329.5 318.2M329.5 318.2L333.7 318.2M329.5 318.2L320.2 315.5M320.2 315.5L326.6 315.5M320.2 315.5L313.5 308.2M313.5 308.2L321.5 308.2M313.5 308.2L311.0 298.2M319.6 298.2L332.4 298.2M319.6 298.2L321.5 288.2M321.5 288.2L333.4 288.2M321.5 288.2L326.6 280.9M326.6 280.9L336.2 280.9M326.6 280.9L333.7 278.2M333.7 278.2L340.0 278.2M333.7 278.2L340.8 280.9M340.8 280.9L343.9 280.9M340.8 280.9L346.0 288.2M346.0 308.2L340.8 315.5M340.8 315.5L343.9 315.5M340.8 315.5L333.7 318.2M333.7 318.2L340.0 318.2M333.7 318.2L326.6 315.5M326.6 315.5L336.2 315.5M326.6 315.5L321.5 308.2M321.5 308.2L333.4 308.2M321.5 308.2L319.6 298.2M332.4 298.2L347.5 298.2M332.4 298.2L333.4 288.2M333.4 288.2L347.5 288.2M333.4 288.2L336.2 280.9M336.2 280.9L347.5 280.9M336.2 280.9L340.0 278.2M340.0 278.2L347.5 278.2M340.0 278.2L343.9 280.9M343.9 280.9L347.5 280.9M343.9 280.9L346.7 288.2M346.7 308.2L343.9 315.5M343.9 315.5L347.5 315.5M343.9 315.5L340.0 318.2M340.0 318.2L347.5 318.2M340.0 318.2L336.2 315.5M336.2 315.5L347.5 315.5M336.2 315.5L333.4 308.2M333.4 308.2L347.5 308.2M333.4 308.2L332.4 298.2" stroke="#2e9077" stroke-width="0.55" fill="none"/>
<path d="M347.5 288.2L348.3 288.2M347.5 288.2L347.5 298.2M347.5 298.2L347.3 298.2M347.5 298.2L347.5 308.2M347.5 308.2L348.3 308.2M348.3 288.2L349.0 288.2M348.3 288.2L347.3 298.2M347.3 298.2L347.1 298.2M347.3 298.2L348.3 308.2M348.3 308.2L349.0 308.2M349.0 288.2L349.5 288.2M349.0 288.2L347.1 298.2M347.1 298.2L347.0 298.2M347.1 298.2L349.0 308.2M349.0 308.2L349.5 308.2M349.5 288.2L349.7 288.2M349.5 288.2L347.0 298.2M347.0 298.2L347.0 298.2M347.0 298.2L349.5 308.2M349.5 308.2L349.7 308.2M349.7 288.2L349.5 288.2M349.7 288.2L347.0 298.2M347.0 298.2L347.0 298.2M347.0 298.2L349.7 308.2M349.7 308.2L349.5 308.2M349.5 288.2L349.0 288.2M349.5 288.2L347.0 298.2M347.0 298.2L347.1 298.2M347.0 298.2L349.5 308.2M349.5 308.2L349.0 308.2M349.0 288.2L348.3 288.2M349.0 288.2L347.1 298.2M347.1 298.2L347.3 298.2M347.1 298.2L349.0 308.2M349.0 308.2L348.3 308.2M348.3 288.2L347.5 288.2M348.3 288.2L347.3 298.2M347.3 298.2L347.5 298.2M347.3 298.2L348.3 308.2M348.3 308.2L347.5 308.2M347.5 288.2L346.7 288.2M347.5 288.2L347.5 298.2M347.5 298.2L347.7 298.2M347.5 298.2L347.5 308.2M347.5 308.2L346.7 308.2M346.7 288.2L346.0 288.2M346.7 288.2L347.7 298.2M347.7 298.2L347.9 298.2M347.7 298.2L346.7 308.2M346.7 308.2L346.0 308.2M346.0 288.2L345.5 288.2M346.0 288.2L347.9 298.2M347.9 298.2L348.0 298.2M347.9 298.2L346.0 308.2M346.0 308.2L345.5 308.2M345.5 288.2L345.3 288.2M345.5 288.2L348.0 298.2M348.0 298.2L348.0 298.2M348.0 298.2L345.5 308.2M345.5 308.2L345.3 308.2M345.3 288.2L345.5 288.2M345.3 288.2L348.0 298.2M348.0 298.2L348.0 298.2M348.0 298.2L345.3 308.2M345.3 308.2L345.5 308.2M345.5 288.2L346.0 288.2M345.5 288.2L348.0 298.2M348.0 298.2L347.9 298.2M348.0 298.2L345.5 308.2M345.5 308.2L346.0 308.2M346.0 288.2L346.7 288.2M346.0 288.2L347.9 298.2M347.9 298.2L347.7 298.2M347.9 298.2L346.0 308.2M346.0 308.2L346.7 308.2M346.7 288.2L347.5 288.2M346.7 288.2L347.7 298.2M347.7 298.2L347.5 298.2M347.7 298.2L346.7 308.2M346.7 308.2L347.5 308.2" stroke="#1fc79e" stroke-width="0.9" fill="none"/>
<path d="M347.5 298.2h0.01M347.5 288.2h0.01M347.5 280.9h0.01M347.5 278.2h0.01M347.5 308.2h0.01M347.5 315.5h0.01M347.5 318.2h0.01M362.6 298.2h0.01M361.6 288.2h0.01M358.8 280.9h0.01M355.0 278.2h0.01M351.1 280.9h0.01M348.3 288.2h0.01M347.3 298.2h0.01M348.3 308.2h0.01M351.1 315.5h0.01M355.0 318.2h0.01M358.8 315.5h0.01M361.6 308.2h0.01M375.4 298.2h0.01M373.5 288.2h0.01M368.4 280.9h0.01M361.3 278.2h0.01M354.2 280.9h0.01M349.0 288.2h0.01M347.1 298.2h0.01M349.0 308.2h0.01M354.2 315.5h0.01M361.3 318.2h0.01M368.4 315.5h0.01M373.5 308.2h0.01M384.0 298.2h0.01M381.5 288.2h0.01M374.8 280.9h0.01M365.5 278.2h0.01M356.3 280.9h0.01M349.5 288.2h0.01M347.0 298.2h0.01M349.5 308.2h0.01M356.3 315.5h0.01M365.5 318.2h0.01M374.8 315.5h0.01M381.5 308.2h0.01M387.0 298.2h0.01M384.3 288.2h0.01M377.0 280.9h0.01M367.0 278.2h0.01M357.0 280.9h0.01M349.7 288.2h0.01M349.7 308.2h0.01M357.0 315.5h0.01M367.0 318.2h0.01M377.0 315.5h0.01M384.3 308.2h0.01M332.4 298.2h0.01M333.4 288.2h0.01M336.2 280.9h0.01M340.0 278.2h0.01M343.9 280.9h0.01M346.7 288.2h0.01M347.7 298.2h0.01M346.7 308.2h0.01M343.9 315.5h0.01M340.0 318.2h0.01M336.2 315.5h0.01M333.4 308.2h0.01M319.6 298.2h0.01M321.5 288.2h0.01M326.6 280.9h0.01M333.7 278.2h0.01M340.8 280.9h0.01M346.0 288.2h0.01M347.9 298.2h0.01M346.0 308.2h0.01M340.8 315.5h0.01M333.7 318.2h0.01M326.6 315.5h0.01M321.5 308.2h0.01M311.0 298.2h0.01M313.5 288.2h0.01M320.2 280.9h0.01M329.5 278.2h0.01M338.7 280.9h0.01M345.5 288.2h0.01M348.0 298.2h0.01M345.5 308.2h0.01M338.7 315.5h0.01M329.5 318.2h0.01M320.2 315.5h0.01M313.5 308.2h0.01M308.0 298.2h0.01M310.7 288.2h0.01M318.0 280.9h0.01M328.0 278.2h0.01M338.0 280.9h0.01M345.3 288.2h0.01M345.3 308.2h0.01M338.0 315.5h0.01M328.0 318.2h0.01M318.0 315.5h0.01M310.7 308.2h0.01" stroke="#f4fcf9" stroke-width="1.6" stroke-linecap="round" fill="none"/>
</g>
<text x="6.2" y="48.8" font-family='"Liberation Sans", sans-serif' font-size="6.1" fill="#d0d0d0" textLength="31.6" lengthAdjust="spacingAndGlyphs">Perspective</text>
<text x="220.6" y="48.8" font-family='"Liberation Sans", sans-serif' font-size="6.1" fill="#d0d0d0" textLength="22.6" lengthAdjust="spacingAndGlyphs">Top - XZ</text>
<text x="6.2" y="216.3" font-family='"Liberation Sans", sans-serif' font-size="6.1" fill="#d0d0d0" textLength="28.0" lengthAdjust="spacingAndGlyphs">Front - XY</text>
<text x="220.6" y="216.3" font-family='"Liberation Sans", sans-serif' font-size="6.1" fill="#d0d0d0" textLength="21.6" lengthAdjust="spacingAndGlyphs">Left - ZY</text>
</svg>
 <!-- right panel -->
 <div class="tab" style="left:504.4px;top:43.2px;width:23px;height:9px;padding-top:1.2px;background:linear-gradient(#f2f2f2,#e2e2e2)">Project</div>
 <div class="tab" style="left:526.8px;top:43.2px;width:22.4px;height:9px;padding-top:1.2px;background:linear-gradient(#f2f2f2,#e2e2e2)">Scene</div>
 <div class="abs" id="panel"></div>
 <div class="tab" style="left:478.6px;top:41.6px;width:26px;height:11.2px;padding-top:2px;background:#fff">Objects</div>
 <div class="lbl" style="left:481.3px;top:54.6px">Object Categories</div>
 <div class="combo" style="top:63px"><span>Compound</span><i></i></div>
 <div class="lbl" style="left:481.3px;top:77px">Objects</div>
 <div class="combo" style="top:85.4px"><span>Torus</span><i></i></div>
 <div class="lbl" style="right:122.2px;top:100.8px">Segments:</div>
 <div class="inp" style="top:98.9px"><span>16</span></div>
 <div class="lbl" style="right:122.2px;top:113.4px">Sides:</div>
 <div class="inp" style="top:111.5px"><span>12</span></div>
 <div class="lbl" style="right:122.2px;top:125.9px">Thickness:</div>
 <div class="inp" style="top:124px"><span>10000.0</span></div>
 <svg class="abs" style="left:600px;top:60px" width="40" height="80" viewBox="600 60 40 80">
  <path d="M626.9 68l1.9 2.3 1.9-2.3zM626.9 90.300l1.9 2.300 1.900-2.300z" fill="#111"/>
  <path d="M630.300 103.900l1.300-1.700 1.300 1.700zM630.300 106.700l1.300 1.700 1.300-1.700zM630.300 116.500l1.300-1.700 1.300 1.700zM630.300 119.300l1.300 1.700 1.300-1.700zM630.300 129.100l1.300-1.700 1.300 1.700zM630.300 131.900l1.300 1.700 1.300-1.700z" fill="#555"/>
 </svg>
 <div class="abs" id="status"><span>Welcome to Leadwerks</span></div>
 <div class="abs" id="edge-t"></div><div class="abs" id="edge-l"></div><div class="abs" id="edge-r"></div><div class="abs" id="edge-b"></div>
</div>
</body></html>
